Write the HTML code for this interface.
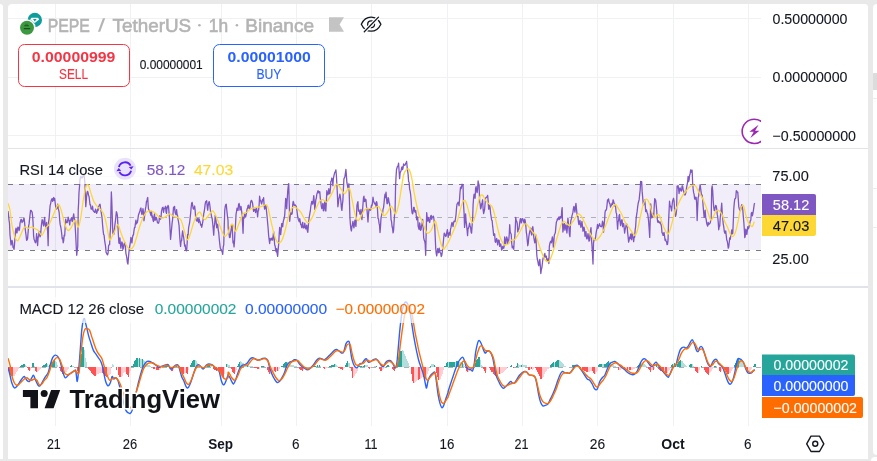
<!DOCTYPE html>
<html><head><meta charset="utf-8">
<style>
html,body{margin:0;padding:0;}
body{width:877px;height:461px;overflow:hidden;background:#e9e9ea;position:relative;font-family:"Liberation Sans",sans-serif;color:#131722;}
.abs{position:absolute;}
#leftp{left:0;top:4px;width:3px;height:455px;background:#fff;border-top-right-radius:3px;}
#rightp{left:873px;top:4px;width:4px;height:451px;background:#fff;border-radius:4px 0 0 4px;}
#rightp2{left:871px;top:457px;width:6px;height:4px;background:#fff;border-top-left-radius:4px;}
.rl{left:873px;width:4px;height:1px;background:#ebebec;}
#rbox{left:873px;top:73px;width:4px;height:17px;background:#dcdcdd;}
#chart{left:8px;top:4px;width:860px;height:455px;background:#fff;border-radius:4px 4px 0 0;overflow:hidden;}
</style></head><body>
<div class="abs" id="leftp"></div>
<div class="abs" id="rightp"></div>
<div class="abs" id="rightp2"></div>
<div class="abs" id="rbox"></div>
<div class="abs rl" style="top:98px"></div><div class="abs rl" style="top:188px"></div><div class="abs rl" style="top:227px"></div>
<div class="abs" id="chart">
<svg id="plot" width="860" height="455" viewBox="8 4 860 455" style="position:absolute;left:0;top:0;will-change:transform" font-family="Liberation Sans, sans-serif">
<g stroke="#f0f1f3" stroke-width="1" shape-rendering="crispEdges" fill="none">
<path d="M55.5 4V426M130.5 4V426M221.5 4V426M296.5 4V426M371.5 4V426M447.5 4V426M522.5 4V426M597.5 4V426M673.5 4V426M748.5 4V426"/>
<path d="M8 18.5H761M8 77.5H761M8 135.5H761M8 176.5H761M8 259.5H761"/>
</g>
<rect x="8" y="148" width="860" height="1" fill="#e0e3eb"/>
<rect x="8" y="286" width="860" height="2" fill="#e0e3eb"/>
<rect x="8" y="184" width="753" height="66" fill="#7e57c2" fill-opacity="0.1"/>
<g stroke="#787b86" stroke-width="1" fill="none" shape-rendering="crispEdges" stroke-dasharray="5 6">
<path d="M8 184.5H761"/><path d="M8 250.5H761"/>
</g>
<path d="M8 217.5H761" stroke="#787b86" stroke-opacity="0.55" stroke-width="1" fill="none" shape-rendering="crispEdges" stroke-dasharray="5 6"/>
<path d="M8.00 211.04L8.50 214.73L9.00 219.97L9.50 223.49L10.01 235.26L10.51 239.76L11.01 245.02L11.51 243.28L12.01 240.48L12.52 242.33L13.02 247.36L13.52 247.66L14.02 249.39L14.52 244.31L15.02 237.12L15.53 230.96L16.03 228.10L16.53 232.76L17.03 232.73L17.53 228.52L18.03 227.03L18.54 227.86L19.04 230.60L19.54 228.95L20.04 223.03L20.54 220.95L21.04 219.32L21.55 219.80L22.05 222.62L22.55 221.17L23.05 221.36L23.55 219.05L24.05 218.11L24.55 222.36L25.06 227.77L25.56 231.60L26.06 235.41L26.56 240.26L27.06 240.01L27.56 238.84L28.07 232.63L28.57 226.39L29.07 223.88L29.57 219.10L30.08 214.46L30.58 210.35L31.08 210.28L31.58 211.61L32.08 211.84L32.59 215.80L33.09 223.01L33.59 235.61L34.09 239.51L34.59 240.54L35.09 242.16L35.59 242.84L36.09 240.32L36.60 233.58L37.10 239.42L37.60 245.48L38.10 237.75L38.60 235.92L39.11 232.11L39.61 231.45L40.11 236.83L40.61 234.85L41.11 228.14L41.61 223.49L42.11 219.73L42.62 219.99L43.12 223.79L43.62 225.95L44.12 222.40L44.62 217.38L45.12 223.99L45.63 226.99L46.13 225.55L46.63 222.37L47.14 226.59L47.64 231.80L48.14 245.63L48.64 221.80L49.14 217.85L49.64 211.09L50.14 205.34L50.65 203.56L51.15 200.63L51.65 199.30L52.15 198.75L52.65 201.32L53.16 198.67L53.66 197.50L54.16 200.32L54.66 198.40L55.16 202.76L55.66 206.55L56.16 209.04L56.67 208.29L57.17 208.19L57.67 204.12L58.17 208.43L58.67 210.21L59.17 212.57L59.68 219.89L60.18 224.65L60.68 226.50L61.18 229.54L61.68 233.65L62.19 238.78L62.69 237.75L63.19 242.74L63.69 240.53L64.19 235.12L64.69 235.69L65.19 226.69L65.70 219.24L66.20 221.66L66.70 222.67L67.20 222.55L67.70 220.29L68.20 217.13L68.71 219.06L69.21 221.76L69.71 224.89L70.21 220.28L70.71 220.22L71.22 218.28L71.72 217.63L72.22 221.61L72.72 220.40L73.22 216.33L73.72 214.01L74.22 218.30L74.73 219.71L75.23 227.31L75.73 236.03L76.23 246.66L76.73 255.30L77.23 250.17L77.74 246.47L78.24 209.39L78.61 202.90L78.99 192.78L79.50 186.56L80.00 179.42L80.50 177.05L81.00 176.57L81.50 177.60L82.00 177.81L82.50 177.61L83.01 176.02L83.51 174.22L84.01 174.78L84.51 178.68L85.01 184.51L85.39 197.02L85.77 206.67L86.14 202.56L86.52 197.04L87.02 192.82L87.52 191.33L88.02 192.58L88.52 195.18L89.03 196.51L89.53 200.47L90.03 204.90L90.53 204.67L91.03 208.99L91.53 208.96L92.03 209.14L92.54 206.22L93.04 210.39L93.54 211.24L94.05 211.27L94.55 212.36L95.05 211.92L95.55 209.06L96.05 211.72L96.55 213.36L97.06 212.28L97.56 209.45L98.06 210.65L98.56 206.34L99.06 205.84L99.56 204.60L100.06 204.25L100.57 208.23L101.07 211.38L101.57 214.68L102.07 217.79L102.57 224.87L103.07 230.16L103.58 234.42L104.08 235.05L104.58 240.06L105.08 243.34L105.58 246.35L106.09 252.39L106.59 253.24L107.09 254.27L107.59 254.87L108.09 253.04L108.59 245.76L109.09 244.69L109.60 244.62L110.10 233.68L110.60 227.27L110.97 208.09L111.35 191.93L111.72 199.58L112.10 210.26L112.48 223.49L112.86 233.51L113.36 234.02L113.86 234.27L114.36 230.15L114.86 225.05L115.37 221.39L115.87 216.38L116.37 211.69L116.87 212.89L117.37 215.64L117.87 224.87L118.38 234.50L118.88 242.96L119.38 243.41L119.88 237.84L120.38 243.95L120.88 248.14L121.38 244.14L121.89 241.85L122.39 243.53L122.89 249.38L123.40 248.03L123.90 244.80L124.40 242.97L124.90 242.69L125.40 246.75L125.90 253.34L126.41 255.61L126.91 258.49L127.41 262.85L127.91 264.13L128.41 258.15L128.91 252.35L129.41 247.77L129.92 244.89L130.42 242.09L130.92 237.33L131.42 240.40L131.92 242.88L132.43 238.23L132.93 235.17L133.43 235.06L133.93 231.05L134.43 227.73L134.93 227.63L135.44 223.37L135.94 220.07L136.44 223.92L136.94 223.05L137.44 222.22L137.94 218.59L138.44 215.11L138.95 213.84L139.45 212.11L139.95 210.68L140.45 208.77L140.95 207.98L141.45 212.66L141.96 214.51L142.46 212.14L142.96 208.53L143.46 212.08L143.96 220.77L144.47 217.18L144.97 212.21L145.47 208.74L145.97 206.19L146.47 201.22L146.97 201.52L147.35 198.25L147.73 197.48L148.10 204.46L148.48 208.87L148.98 210.41L149.48 210.38L149.99 212.10L150.49 213.95L150.99 215.66L151.49 211.34L151.99 216.54L152.49 215.98L153.00 220.12L153.50 221.55L154.00 217.16L154.50 213.87L155.00 220.25L155.50 219.63L156.00 217.41L156.51 217.76L157.01 220.30L157.51 222.85L158.01 222.93L158.51 223.22L159.01 221.59L159.52 215.99L160.02 218.05L160.52 219.24L161.02 217.08L161.52 211.32L162.03 209.06L162.53 207.54L163.03 207.21L163.53 212.30L164.03 209.19L164.53 208.35L165.03 207.93L165.54 206.25L166.04 212.10L166.54 213.42L167.04 207.16L167.54 207.72L168.05 205.43L168.55 206.69L169.05 212.93L169.55 219.42L170.05 229.48L170.55 239.40L171.06 234.15L171.56 228.99L172.06 223.33L172.56 219.78L173.06 213.15L173.56 207.15L174.06 209.65L174.57 206.33L175.07 212.24L175.57 213.76L176.07 214.70L176.57 209.57L177.07 214.26L177.58 215.78L178.08 219.66L178.58 222.25L179.08 225.75L179.58 234.82L180.09 241.30L180.59 246.46L181.09 241.22L181.59 240.85L182.09 235.34L182.60 230.89L183.10 234.51L183.60 237.19L184.10 240.76L184.60 245.98L185.11 244.95L185.61 248.82L186.11 250.64L186.61 250.82L187.11 244.11L187.61 234.52L188.12 234.83L188.62 227.65L189.12 225.24L189.62 222.71L190.12 217.95L190.62 213.45L191.12 207.77L191.63 203.31L192.13 202.35L192.63 205.19L193.13 208.52L193.63 209.09L194.13 208.20L194.64 206.01L195.14 210.26L195.64 217.79L196.14 219.76L196.64 220.83L197.14 221.22L197.65 218.53L198.15 218.63L198.65 222.57L199.15 218.88L199.65 220.76L200.16 222.08L200.66 225.04L201.16 224.43L201.66 227.24L202.16 225.06L202.66 222.50L203.16 219.30L203.67 213.89L204.17 211.74L204.67 208.32L205.17 204.10L205.67 201.65L206.18 201.53L206.68 200.71L207.18 206.11L207.68 210.19L208.18 205.38L208.68 202.80L209.19 201.60L209.69 204.23L210.19 208.38L210.69 212.95L211.19 214.36L211.69 217.30L212.19 218.74L212.70 223.26L213.20 228.63L213.70 235.14L214.20 226.75L214.70 223.94L215.20 215.30L215.71 218.38L216.21 222.33L216.71 227.74L217.21 224.19L217.71 224.67L218.22 229.95L218.72 232.65L219.22 238.45L219.72 243.42L220.22 247.61L220.73 249.36L221.23 249.36L221.73 250.99L222.23 251.98L222.73 254.28L223.24 247.02L223.74 244.92L224.24 226.77L224.74 210.43L225.24 206.52L225.74 204.61L226.25 204.11L226.75 209.47L227.38 215.59L228.00 220.07L228.15 227.24L228.57 231.47L229.00 233.29L229.50 237.35L230.01 237.57L230.51 233.99L231.01 230.35L231.51 227.19L232.01 224.48L232.51 232.59L233.02 242.96L233.52 241.12L234.02 246.93L234.52 241.01L235.02 230.23L235.53 224.37L236.03 214.36L236.53 211.52L237.03 208.15L237.53 210.05L238.03 210.43L238.53 204.84L239.04 203.48L239.54 205.47L240.04 210.13L240.54 207.55L241.04 206.47L241.55 210.74L242.05 214.08L242.55 223.58L243.05 233.33L243.55 217.36L244.06 218.43L244.56 214.06L245.06 215.22L245.56 217.02L246.06 215.10L246.56 212.70L247.06 209.12L247.57 208.11L248.07 205.46L248.57 205.07L249.07 208.38L249.57 209.03L250.07 207.58L250.58 202.53L251.08 200.70L251.58 200.37L252.08 201.74L252.58 203.24L253.09 207.69L253.59 211.42L254.09 210.89L254.59 209.25L255.09 209.01L255.59 212.61L256.10 209.63L256.60 208.26L257.10 211.27L257.60 216.97L258.10 211.28L258.60 210.14L259.11 204.98L259.61 196.24L260.11 200.72L260.61 200.38L261.11 202.69L261.61 203.98L262.12 201.82L262.62 199.39L263.12 200.58L263.62 197.71L264.12 205.42L264.62 209.07L265.12 208.61L265.63 205.02L266.13 207.14L266.63 212.42L267.13 216.95L267.64 223.01L268.14 228.49L268.64 235.47L269.14 239.80L269.64 243.49L270.14 238.35L270.65 240.07L271.15 240.13L271.65 238.12L272.15 238.14L272.65 240.14L273.15 235.75L273.66 231.56L274.16 237.51L274.66 244.98L275.16 246.03L275.66 250.13L276.17 251.92L276.67 248.58L277.17 253.75L277.67 256.30L278.17 249.41L278.67 243.97L279.18 234.44L279.68 227.33L280.18 230.84L280.68 234.67L281.18 229.59L281.68 223.67L282.19 223.71L282.69 226.74L283.19 221.81L283.69 219.79L284.19 218.49L284.69 215.12L285.19 207.38L285.70 198.29L286.20 201.46L286.70 208.60L287.20 199.65L287.70 191.28L288.20 186.52L288.71 183.61L289.21 202.80L289.71 221.29L290.21 215.61L290.71 212.56L291.22 213.47L291.72 214.34L292.22 213.13L292.72 204.56L293.22 201.35L293.72 202.76L294.23 205.50L294.73 205.33L295.23 204.92L295.73 205.67L296.23 206.32L296.73 209.20L297.24 213.09L297.74 216.81L298.24 219.16L298.74 220.38L299.24 221.72L299.74 218.72L300.25 221.81L300.75 224.58L301.25 225.11L301.75 227.59L302.25 224.17L302.75 222.29L303.25 227.99L303.76 226.77L304.26 227.76L304.76 223.13L305.26 226.14L305.77 228.90L306.27 227.70L306.77 225.25L307.27 230.61L307.77 232.37L308.27 226.92L308.78 220.49L309.28 216.87L309.78 213.87L310.28 211.22L310.78 206.74L311.28 203.90L311.79 201.44L312.29 201.92L312.79 204.23L313.29 200.11L313.79 195.64L314.30 202.31L314.80 209.28L315.30 205.13L315.80 199.74L316.30 198.32L316.80 194.22L317.31 193.10L317.81 190.90L318.31 190.95L318.81 192.95L319.31 191.70L319.81 191.89L320.31 198.35L320.82 201.67L321.32 206.45L321.82 208.55L322.32 207.51L322.82 203.34L323.32 210.59L323.83 210.77L324.33 204.05L324.83 201.35L325.33 209.19L325.83 211.02L326.33 202.32L326.84 190.73L327.34 193.40L327.84 194.81L328.34 192.98L328.84 188.70L329.35 193.77L329.85 193.50L330.35 189.67L330.85 181.32L331.35 180.93L331.85 178.02L332.36 179.17L332.86 185.62L333.36 178.76L333.86 176.15L334.36 173.93L334.86 172.10L335.37 171.88L335.87 169.84L336.37 175.30L336.87 184.30L337.37 193.85L337.87 206.78L338.38 203.09L338.88 198.39L339.38 197.11L339.88 194.21L340.38 197.22L340.88 201.19L341.38 207.75L341.89 210.34L342.39 204.38L342.89 200.36L343.39 188.91L343.90 179.08L344.40 177.81L344.90 176.86L345.40 173.08L345.90 169.28L346.40 175.66L346.91 182.94L347.41 184.84L347.91 187.91L348.41 186.07L348.91 183.77L349.42 200.09L349.92 217.56L350.42 224.73L350.92 229.09L351.42 230.97L351.92 226.55L352.43 224.29L352.93 221.30L353.43 225.78L353.93 227.85L354.43 223.90L354.93 220.25L355.44 224.23L355.94 226.39L356.44 216.42L356.94 205.38L357.44 203.23L357.94 201.60L358.44 211.08L358.95 209.79L359.45 211.45L359.95 214.21L360.45 212.57L360.95 209.51L361.45 216.71L361.96 219.55L362.46 211.63L362.96 204.56L363.46 198.02L363.96 196.20L364.47 201.55L364.97 201.26L365.47 199.09L365.97 199.85L366.47 206.49L366.97 209.39L367.48 215.43L367.98 221.98L368.48 213.96L368.98 209.56L369.48 209.41L369.98 209.95L370.49 210.23L370.99 208.56L371.49 205.11L371.99 205.72L372.49 202.79L372.99 197.21L373.50 200.64L374.00 202.12L374.50 203.43L375.00 204.15L375.50 203.16L376.00 206.34L376.50 201.53L377.01 203.21L377.51 209.90L378.01 218.36L378.51 218.96L379.01 223.15L379.51 225.18L380.02 232.55L380.52 226.10L381.02 217.88L381.52 215.72L382.03 213.10L382.53 213.55L383.03 209.25L383.53 207.62L384.03 203.22L384.53 197.65L385.04 194.07L385.54 197.50L386.04 192.19L386.54 198.91L387.04 203.62L387.55 203.58L388.05 197.72L388.55 198.46L389.05 202.34L389.55 203.51L390.05 207.77L390.56 210.18L391.06 219.84L391.56 221.51L392.06 226.55L392.56 228.27L393.06 232.86L393.56 230.59L394.07 222.11L394.57 214.47L395.07 210.67L395.57 186.27L396.07 176.14L396.57 169.17L397.07 167.67L397.58 166.06L398.08 166.16L398.58 163.22L399.08 170.85L399.58 178.65L400.08 173.11L400.59 171.74L401.09 170.75L401.59 167.80L402.10 166.86L402.60 169.57L403.10 167.78L403.60 163.99L404.10 165.37L404.60 165.20L405.11 165.18L405.61 163.45L406.11 162.86L406.61 161.47L407.11 166.63L407.61 170.86L408.12 174.36L408.62 181.62L409.12 182.18L409.62 189.27L410.12 190.93L410.62 194.49L411.12 199.96L411.63 208.84L412.13 213.18L412.63 213.78L413.13 211.89L413.63 207.31L414.13 207.48L414.64 211.28L415.14 212.28L415.64 210.37L416.14 213.94L416.64 219.77L417.14 218.51L417.65 216.84L418.15 225.98L418.65 227.98L419.15 229.53L419.65 222.86L420.15 226.20L420.66 230.30L421.16 229.14L421.66 225.55L422.16 223.31L422.66 219.45L423.17 227.20L423.67 237.63L424.17 240.20L424.67 241.00L425.17 243.85L425.67 255.24L426.18 233.23L426.68 212.62L427.18 217.39L427.68 221.02L428.18 217.39L428.68 218.21L429.19 221.41L429.69 222.49L430.19 219.35L430.69 216.08L431.19 215.36L431.69 219.27L432.19 217.21L432.70 217.12L433.20 216.06L433.70 217.27L434.20 221.53L434.70 225.33L435.20 236.63L435.71 248.23L436.21 253.36L436.71 255.90L437.21 252.39L437.71 248.71L438.22 251.25L438.72 252.78L439.22 248.26L439.72 250.89L440.23 252.58L440.73 253.17L441.23 256.52L441.73 255.37L442.23 252.28L442.73 247.80L443.24 243.00L443.74 237.49L444.24 233.11L444.74 233.66L445.24 235.48L445.74 236.51L446.25 235.62L446.75 232.68L447.38 229.63L448.00 234.35L448.15 237.33L448.57 233.60L449.00 233.81L449.50 232.31L450.01 235.41L450.51 229.26L451.01 227.44L451.51 224.08L452.01 222.39L452.51 224.04L453.02 226.59L453.52 223.06L454.02 221.04L454.52 221.43L455.02 221.54L455.52 218.27L456.03 214.55L456.53 208.10L457.03 203.84L457.53 203.86L458.03 202.21L458.53 203.08L459.04 205.60L459.54 199.10L460.04 191.96L460.54 187.11L461.04 188.73L461.55 186.99L462.05 184.26L462.55 185.02L463.05 184.90L463.55 205.19L464.06 212.70L464.56 227.39L465.06 221.13L465.56 213.82L466.06 220.65L466.56 225.09L467.06 229.66L467.57 235.70L468.07 228.24L468.57 228.23L469.07 225.85L469.57 223.09L470.07 226.07L470.58 227.27L471.08 231.96L471.58 233.20L472.08 225.85L472.58 220.56L473.09 204.91L473.59 197.97L474.09 194.11L474.59 196.36L475.09 198.24L475.60 188.53L476.10 186.65L476.60 190.60L477.10 192.68L477.60 189.42L478.10 180.89L478.61 183.80L479.11 184.92L479.61 201.40L480.11 203.63L480.61 208.87L481.11 207.56L481.61 203.98L482.12 202.64L482.62 199.77L483.12 209.68L483.62 213.59L484.12 211.52L484.62 209.24L485.12 203.04L485.63 198.04L486.13 197.38L486.63 197.26L487.13 196.71L487.64 195.34L488.14 200.77L488.64 209.18L489.14 208.73L489.64 205.38L490.14 208.09L490.65 213.67L491.15 216.75L491.65 220.24L492.15 220.53L492.65 226.19L493.15 230.13L493.66 235.33L494.16 233.96L494.66 233.99L495.16 241.54L495.66 242.31L496.17 240.10L496.67 238.51L497.17 240.68L497.67 244.83L498.17 241.17L498.67 240.05L499.18 240.52L499.68 246.38L500.18 245.69L500.68 243.80L501.18 246.31L501.68 250.22L502.19 249.06L502.69 246.51L503.19 246.57L503.69 248.30L504.19 246.15L504.69 237.00L505.19 241.98L505.70 243.95L506.20 239.13L506.70 236.97L507.20 238.48L507.70 243.43L508.20 239.90L508.71 240.53L509.21 234.84L509.71 224.74L510.21 232.40L510.71 233.19L511.22 234.24L511.72 243.49L512.22 247.78L512.72 246.43L513.22 247.53L513.72 249.25L514.23 240.39L514.73 237.86L515.23 229.28L515.73 217.43L516.23 220.78L516.73 221.33L517.24 223.36L517.74 231.85L518.24 229.77L518.74 229.32L519.24 226.50L519.74 222.26L520.25 219.04L520.75 218.59L521.25 222.97L521.75 220.99L522.25 218.93L522.75 218.69L523.25 220.05L523.76 222.22L524.26 223.17L524.76 219.13L525.26 221.01L525.77 225.04L526.27 231.78L526.77 235.09L527.27 240.74L527.77 245.75L528.27 243.18L528.78 236.86L529.28 233.90L529.78 231.34L530.28 229.83L530.78 228.14L531.28 233.44L531.79 235.05L532.29 229.16L532.79 226.60L533.29 230.61L533.79 237.40L534.29 240.30L534.80 242.83L535.30 240.70L535.80 234.96L536.30 244.82L536.80 255.26L537.30 258.97L537.81 261.02L538.31 264.21L538.81 265.77L539.31 261.96L539.81 259.31L540.32 265.70L540.82 273.49L541.32 269.46L541.82 267.86L542.32 263.96L542.82 259.51L543.33 257.38L543.83 257.74L544.33 254.72L544.83 253.42L545.33 257.16L545.83 256.84L546.34 256.14L546.84 259.88L547.34 260.69L547.84 258.81L548.34 259.36L548.84 263.50L549.35 246.33L549.85 243.52L550.35 241.84L550.85 241.09L551.35 242.81L551.86 239.98L552.36 236.91L552.86 240.41L553.36 247.12L553.86 240.89L554.36 234.92L554.87 233.80L555.37 232.50L555.87 226.93L556.37 222.16L556.87 220.88L557.37 218.93L557.88 219.81L558.38 217.76L558.88 217.02L559.38 219.48L559.88 217.04L560.38 216.59L560.88 218.20L561.39 215.84L561.76 210.28L562.14 207.61L562.51 221.76L562.89 231.99L563.39 228.63L563.90 224.42L564.40 223.66L564.90 230.10L565.40 225.43L565.90 224.90L566.40 228.37L566.91 232.99L567.41 227.11L567.91 218.09L568.41 223.14L568.91 227.54L569.41 234.15L569.92 236.63L570.42 225.47L570.92 220.16L571.42 219.08L571.92 215.94L572.42 214.23L572.93 212.17L573.43 208.44L573.93 206.36L574.43 209.40L574.93 212.16L575.43 207.44L575.94 203.36L576.44 208.35L576.94 213.49L577.44 216.63L577.94 216.35L578.45 222.09L578.95 224.55L579.45 222.57L579.95 220.46L580.45 224.97L580.95 227.38L581.46 224.31L581.96 221.48L582.46 225.80L582.96 231.24L583.46 230.33L583.96 227.09L584.47 229.07L584.97 236.23L585.47 234.97L585.97 231.56L586.47 237.95L586.97 239.03L587.48 237.34L587.98 233.54L588.48 236.96L588.98 241.16L589.48 240.67L589.98 235.54L590.49 230.95L590.99 227.64L591.49 239.17L591.99 246.16L592.49 253.72L592.99 264.00L593.50 243.21L594.00 239.68L594.50 240.41L595.00 239.51L595.50 237.80L596.00 233.64L596.51 230.67L597.01 228.54L597.51 224.44L598.01 228.31L598.51 226.67L599.01 225.59L599.52 223.74L600.02 225.22L600.52 226.41L601.02 226.56L601.52 226.73L602.02 224.79L602.53 221.06L603.03 223.11L603.53 232.12L604.03 225.79L604.53 220.80L605.03 212.39L605.54 210.12L606.04 210.31L606.54 209.18L607.04 204.82L607.54 199.93L608.04 200.93L608.55 198.89L609.05 202.08L609.55 203.37L610.05 204.20L610.55 207.12L611.05 205.47L611.56 205.10L612.06 203.21L612.56 204.49L613.06 199.83L613.56 201.08L614.07 203.20L614.57 203.84L615.07 206.45L615.57 206.58L616.07 212.38L616.57 213.78L617.08 221.13L617.58 229.10L618.08 221.61L618.58 220.90L619.08 215.50L619.58 214.48L620.09 221.83L620.59 225.71L621.09 222.96L621.59 219.87L622.10 219.83L622.60 226.75L623.10 224.15L623.60 223.56L624.10 227.20L624.60 233.05L625.11 229.53L625.61 227.93L626.11 225.23L626.61 223.87L627.11 225.26L627.61 232.37L628.12 236.84L628.62 242.16L629.12 240.04L629.62 237.13L630.12 238.41L630.62 234.16L631.12 238.90L631.63 239.80L632.13 233.01L632.63 236.10L633.13 237.31L633.63 241.65L634.13 237.10L634.64 237.30L635.14 229.86L635.64 226.53L636.14 218.66L636.64 214.62L637.14 211.42L637.65 206.83L638.15 203.52L638.65 201.50L639.15 199.63L639.65 194.68L640.15 190.22L640.66 181.28L641.16 182.98L641.66 181.71L642.16 191.63L642.66 197.08L643.16 203.36L643.67 204.99L644.17 201.95L644.67 200.02L645.17 203.86L645.67 211.55L646.17 209.63L646.68 210.73L647.18 213.19L647.68 213.87L648.18 217.37L648.68 222.19L649.18 229.10L649.69 237.43L650.19 221.15L650.69 203.81L651.19 209.00L651.69 217.91L652.20 217.27L652.70 213.93L653.20 217.08L653.70 216.65L654.20 206.73L654.70 198.67L655.21 199.50L655.71 200.40L656.21 205.41L656.71 210.66L657.21 218.29L657.71 222.19L658.36 220.81L659.01 222.65L659.51 222.80L660.01 221.91L660.51 223.74L661.01 224.28L661.51 226.84L662.02 232.93L662.52 232.95L663.02 235.46L663.52 235.44L664.02 232.41L664.52 235.48L665.03 240.26L665.53 239.04L666.03 241.27L666.53 241.63L667.03 244.56L667.53 244.37L668.04 239.92L668.54 222.39L669.04 211.37L669.54 201.23L670.04 205.72L670.55 206.12L671.05 208.19L671.55 210.86L672.05 205.53L672.55 201.45L673.05 199.77L673.56 198.27L674.06 201.08L674.56 208.63L675.06 209.15L675.56 216.45L676.07 214.33L676.57 209.95L677.07 186.10L677.57 186.42L678.07 185.57L678.58 188.87L679.08 193.53L679.58 189.29L680.08 187.81L680.58 189.72L681.08 191.16L681.59 190.95L682.09 185.78L682.59 185.93L683.09 189.22L683.59 190.97L684.09 192.72L684.60 194.94L685.10 194.90L685.60 193.65L686.10 191.55L686.60 187.36L687.10 184.87L687.61 182.21L688.11 176.36L688.61 181.49L689.11 179.92L689.61 175.23L690.11 173.98L690.62 169.98L691.12 172.23L691.62 170.14L692.12 170.16L692.62 182.75L693.12 188.67L693.62 192.69L694.12 194.44L694.63 198.84L695.13 199.12L695.63 197.18L696.13 197.36L696.64 203.45L697.14 220.59L697.64 208.21L698.14 197.43L698.64 196.35L699.14 190.40L699.64 187.90L700.15 184.62L700.65 188.58L701.15 192.38L701.65 196.23L702.15 195.01L702.65 199.33L703.16 206.78L703.66 212.30L704.16 217.38L704.66 214.50L705.16 210.19L705.66 217.14L706.17 219.45L706.67 223.40L707.17 224.95L707.67 226.18L708.17 222.28L708.67 224.63L709.18 224.07L709.68 223.36L710.18 223.06L710.68 220.61L711.18 219.67L711.69 188.74L712.19 185.95L712.69 190.83L713.19 200.40L713.69 206.66L714.20 210.53L714.70 210.52L715.20 206.94L715.70 205.37L716.20 205.97L716.70 208.77L717.21 214.14L717.71 216.98L718.21 221.87L718.71 229.75L719.21 226.59L719.71 226.11L720.22 218.03L720.72 213.50L721.22 208.93L721.72 203.10L722.22 212.83L722.72 218.18L723.23 224.24L723.73 226.66L724.23 231.01L724.73 233.06L725.23 233.24L725.73 230.90L726.24 235.52L726.74 240.08L727.24 241.09L727.74 244.01L728.24 248.20L728.74 247.02L729.25 242.30L729.75 237.93L730.25 239.39L730.75 235.89L731.25 233.36L731.75 229.82L732.25 233.75L732.76 233.20L733.26 222.33L733.76 209.25L734.26 203.35L734.77 198.85L735.27 198.83L735.77 197.83L736.27 190.77L736.77 191.08L737.27 192.39L737.78 192.21L738.28 199.11L738.78 206.65L739.28 208.74L739.78 210.25L740.28 210.69L740.79 209.47L741.29 206.53L741.79 204.61L742.29 206.50L742.79 209.91L743.29 216.33L743.80 221.94L744.30 228.98L744.80 237.63L745.30 235.53L745.80 229.24L746.30 231.22L746.81 234.43L747.31 230.50L747.81 226.59L748.31 228.79L748.81 227.89L749.32 225.44L749.82 223.07L750.32 220.56L750.82 220.23L751.32 213.06L751.82 212.47L752.33 215.76L752.83 213.75L753.33 210.78L753.83 207.45L754.33 203.75L754.90 203.20" fill="none" stroke="#7e57c2" stroke-width="1.3" stroke-linejoin="round"/>
<path d="M8.00 203.15C8.34 204.32 9.38 206.70 10.01 210.17C10.64 213.64 11.05 219.79 11.76 223.97C12.47 228.15 13.31 232.46 14.27 235.26C15.23 238.06 16.48 240.78 17.53 240.78C18.58 240.78 19.41 237.52 20.54 235.26C21.67 233.00 23.05 228.40 24.31 227.23C25.56 226.06 26.82 228.23 28.07 228.23C29.32 228.23 30.58 227.10 31.83 227.23C33.08 227.36 34.55 228.49 35.59 228.99C36.64 229.49 37.05 229.20 38.10 230.24C39.15 231.28 40.61 235.59 41.87 235.26C43.12 234.92 44.38 230.11 45.63 228.23C46.88 226.35 48.14 226.14 49.39 223.97C50.64 221.80 51.89 218.12 53.15 215.19C54.41 212.26 55.96 208.17 56.92 206.41C57.88 204.65 58.21 204.02 58.92 204.65C59.63 205.28 60.26 207.16 61.18 210.17C62.10 213.18 63.35 219.37 64.44 222.71C65.53 226.06 66.66 229.32 67.70 230.24C68.75 231.16 69.71 229.48 70.71 228.23C71.71 226.97 72.88 224.05 73.72 222.71C74.56 221.37 74.98 219.46 75.73 220.21C76.48 220.96 77.40 227.65 78.24 227.23C79.08 226.81 79.91 222.21 80.75 217.70C81.59 213.19 82.42 205.24 83.26 200.14C84.10 195.04 84.94 189.60 85.77 187.09C86.60 184.58 87.44 184.17 88.27 185.09C89.10 186.01 89.94 190.10 90.78 192.61C91.62 195.12 92.45 198.13 93.29 200.14C94.13 202.15 94.96 203.40 95.80 204.65C96.64 205.90 97.39 206.74 98.31 207.66C99.23 208.58 100.27 208.71 101.32 210.17C102.36 211.63 103.62 213.51 104.58 216.44C105.54 219.37 106.25 223.84 107.09 227.73C107.93 231.62 108.77 238.31 109.60 239.77C110.43 241.23 111.26 237.89 112.10 236.51C112.94 235.13 113.65 233.46 114.61 231.49C115.57 229.53 116.83 224.51 117.87 224.72C118.92 224.93 119.88 230.16 120.88 232.75C121.88 235.34 122.85 237.97 123.90 240.27C124.95 242.57 126.07 245.09 127.16 246.55C128.25 248.01 129.38 249.05 130.42 249.05C131.46 249.05 132.43 248.43 133.43 246.55C134.43 244.67 135.40 241.12 136.44 237.77C137.48 234.43 138.53 230.03 139.70 226.48C140.87 222.92 142.21 218.95 143.46 216.44C144.71 213.93 145.97 212.35 147.22 211.43C148.47 210.51 149.74 210.71 150.99 210.92C152.25 211.13 153.50 211.76 154.75 212.68C156.00 213.60 157.25 215.52 158.51 216.44C159.76 217.36 161.03 218.20 162.28 218.20C163.53 218.20 164.79 217.15 166.04 216.44C167.29 215.73 168.55 213.93 169.80 213.93C171.05 213.93 172.31 215.90 173.56 216.44C174.81 216.98 176.08 216.56 177.33 217.19C178.59 217.82 179.84 217.62 181.09 220.21C182.34 222.80 183.81 229.49 184.85 232.75C185.89 236.01 186.52 239.35 187.36 239.77C188.20 240.19 188.83 238.10 189.87 235.26C190.91 232.42 192.38 226.27 193.63 222.71C194.88 219.16 196.36 215.69 197.40 213.93C198.44 212.18 199.06 211.76 199.90 212.18C200.74 212.60 201.57 215.19 202.41 216.44C203.25 217.69 203.88 219.91 204.92 219.70C205.96 219.49 207.43 216.65 208.68 215.19C209.94 213.73 211.40 211.13 212.45 210.92C213.50 210.71 213.92 211.97 214.96 213.93C216.00 215.90 217.47 219.57 218.72 222.71C219.97 225.85 221.44 230.45 222.48 232.75C223.52 235.05 224.07 236.43 224.99 236.51C225.91 236.59 227.47 233.88 228.00 233.25C228.53 232.62 227.73 234.00 228.15 232.75C228.57 231.50 229.70 227.06 230.51 225.72C231.32 224.38 232.18 223.76 233.02 224.72C233.86 225.68 234.49 231.83 235.53 231.49C236.57 231.16 238.04 225.64 239.29 222.71C240.54 219.78 241.80 215.69 243.05 213.93C244.30 212.18 245.56 213.02 246.81 212.18C248.06 211.34 249.33 209.67 250.58 208.92C251.84 208.17 253.09 207.95 254.34 207.66C255.59 207.37 256.85 207.37 258.10 207.16C259.36 206.95 260.62 206.83 261.87 206.41C263.12 205.99 264.67 204.65 265.63 204.65C266.59 204.65 267.01 204.86 267.64 206.41C268.27 207.96 268.68 210.80 269.39 213.93C270.10 217.06 271.06 221.66 271.90 225.22C272.74 228.78 273.57 232.54 274.41 235.26C275.25 237.98 276.08 240.28 276.92 241.53C277.76 242.78 278.60 242.99 279.43 242.78C280.26 242.57 280.97 242.36 281.93 240.27C282.89 238.18 284.14 234.00 285.19 230.24C286.24 226.48 287.20 221.25 288.21 217.70C289.21 214.15 290.18 210.68 291.22 208.92C292.27 207.16 293.39 207.16 294.48 207.16C295.57 207.16 296.69 208.08 297.74 208.92C298.79 209.76 299.62 210.51 300.75 212.18C301.88 213.85 303.26 217.19 304.51 218.95C305.76 220.70 307.01 222.92 308.27 222.71C309.52 222.50 310.79 220.00 312.04 217.70C313.30 215.40 314.55 211.64 315.80 208.92C317.05 206.20 318.39 202.94 319.56 201.39C320.73 199.84 321.69 199.51 322.82 199.64C323.95 199.76 325.21 202.47 326.34 202.14C327.47 201.80 328.51 199.43 329.60 197.63C330.69 195.83 331.81 193.54 332.86 191.36C333.91 189.19 334.95 185.62 335.87 184.58C336.79 183.54 337.46 184.25 338.38 185.09C339.30 185.93 340.34 188.14 341.39 189.60C342.44 191.06 343.69 193.79 344.65 193.87C345.61 193.95 346.33 190.94 347.16 190.10C348.00 189.26 348.83 187.18 349.66 188.85C350.50 190.52 351.33 196.17 352.17 200.14C353.01 204.11 353.84 209.34 354.68 212.68C355.52 216.03 356.35 219.17 357.19 220.21C358.03 221.25 358.65 220.41 359.70 218.95C360.75 217.49 362.21 213.23 363.46 211.43C364.71 209.63 365.97 208.58 367.22 208.16C368.48 207.74 369.74 209.00 370.99 208.92C372.25 208.84 373.50 208.08 374.75 207.66C376.00 207.24 377.38 205.78 378.51 206.41C379.64 207.04 380.60 209.88 381.52 211.43C382.44 212.98 383.07 215.48 384.03 215.69C384.99 215.90 386.20 214.23 387.29 212.68C388.38 211.13 389.59 207.04 390.55 206.41C391.51 205.78 392.22 207.67 393.06 208.92C393.90 210.17 394.65 214.56 395.57 213.93C396.49 213.30 397.66 209.12 398.58 205.15C399.50 201.18 400.25 195.12 401.09 190.10C401.93 185.08 402.76 178.40 403.60 175.05C404.44 171.71 405.19 170.95 406.11 170.03C407.03 169.11 408.20 168.28 409.12 169.53C410.04 170.78 410.80 173.71 411.63 177.56C412.46 181.41 413.30 188.01 414.13 192.61C414.96 197.21 415.80 201.39 416.64 205.15C417.48 208.91 418.19 212.47 419.15 215.19C420.11 217.91 421.45 219.16 422.41 221.46C423.37 223.76 424.08 227.03 424.92 228.99C425.76 230.96 426.38 233.04 427.43 233.25C428.48 233.46 430.06 232.00 431.19 230.24C432.32 228.48 433.45 224.17 434.20 222.71C434.95 221.25 435.12 220.21 435.71 221.46C436.29 222.72 436.87 226.69 437.71 230.24C438.55 233.79 439.81 239.65 440.73 242.78C441.65 245.91 442.40 248.42 443.23 249.05C444.06 249.68 444.94 247.60 445.74 246.55C446.54 245.50 447.60 243.41 448.00 242.78C448.40 242.15 447.65 243.82 448.15 242.78C448.65 241.74 449.99 238.81 451.01 236.51C452.03 234.21 453.18 231.71 454.27 228.99C455.36 226.27 456.48 223.56 457.53 220.21C458.57 216.87 459.62 212.06 460.54 208.92C461.46 205.78 462.21 202.64 463.05 201.39C463.89 200.13 464.72 200.13 465.56 201.39C466.40 202.64 467.23 205.99 468.07 208.92C468.91 211.85 469.83 216.65 470.58 218.95C471.33 221.25 471.83 223.13 472.58 222.71C473.33 222.29 474.25 219.37 475.09 216.44C475.93 213.51 476.76 208.50 477.60 205.15C478.44 201.81 479.27 198.04 480.11 196.37C480.95 194.70 481.78 194.58 482.62 195.12C483.46 195.66 484.21 198.30 485.13 199.64C486.05 200.98 487.01 202.02 488.14 203.15C489.27 204.28 490.85 204.61 491.90 206.41C492.94 208.21 493.57 210.80 494.41 213.93C495.25 217.06 496.08 221.66 496.92 225.22C497.76 228.78 498.60 232.54 499.43 235.26C500.26 237.98 501.10 239.94 501.93 241.53C502.76 243.12 503.39 244.37 504.44 244.79C505.49 245.21 507.08 244.79 508.21 244.04C509.34 243.29 510.18 240.98 511.22 240.27C512.26 239.56 513.39 240.61 514.48 239.77C515.57 238.94 516.70 236.85 517.74 235.26C518.78 233.67 519.83 231.91 520.75 230.24C521.67 228.57 522.34 226.26 523.26 225.22C524.18 224.18 525.23 223.55 526.27 223.97C527.31 224.39 528.44 226.35 529.53 227.73C530.62 229.11 531.75 231.00 532.79 232.25C533.83 233.50 534.88 233.50 535.80 235.26C536.72 237.01 537.47 240.27 538.31 242.78C539.15 245.29 539.99 248.01 540.82 250.31C541.66 252.61 542.49 254.82 543.32 256.58C544.16 258.33 544.91 260.00 545.83 260.84C546.75 261.68 547.92 262.31 548.84 261.60C549.76 260.89 550.51 258.67 551.35 256.58C552.19 254.49 553.02 251.77 553.86 249.05C554.70 246.33 555.53 243.20 556.37 240.27C557.21 237.34 558.04 234.21 558.88 231.49C559.72 228.77 560.55 225.64 561.39 223.97C562.23 222.30 562.94 221.46 563.90 221.46C564.86 221.46 566.20 223.26 567.16 223.97C568.12 224.68 568.82 225.93 569.66 225.72C570.50 225.51 571.21 224.05 572.17 222.71C573.13 221.37 574.38 219.16 575.43 217.70C576.47 216.24 577.52 214.27 578.44 213.93C579.36 213.59 580.11 214.64 580.95 215.69C581.79 216.74 582.54 218.41 583.46 220.21C584.38 222.01 585.43 224.39 586.47 226.48C587.51 228.57 588.64 230.78 589.73 232.75C590.82 234.72 591.95 237.02 592.99 238.27C594.03 239.52 595.00 240.35 596.00 240.27C597.00 240.19 597.96 239.02 599.01 237.77C600.06 236.52 601.19 234.76 602.28 232.75C603.37 230.74 604.50 228.23 605.54 225.72C606.58 223.21 607.55 220.29 608.55 217.70C609.55 215.11 610.64 212.26 611.56 210.17C612.48 208.08 613.32 206.07 614.07 205.15C614.82 204.23 615.32 204.02 616.07 204.65C616.82 205.28 617.66 207.37 618.58 208.92C619.50 210.47 620.55 211.84 621.59 213.93C622.63 216.02 623.76 219.37 624.85 221.46C625.94 223.55 627.07 224.93 628.11 226.48C629.15 228.03 629.99 229.28 631.12 230.74C632.25 232.20 633.84 235.34 634.89 235.26C635.94 235.18 636.56 232.96 637.40 230.24C638.24 227.52 639.06 222.71 639.90 218.95C640.74 215.19 641.57 210.79 642.41 207.66C643.25 204.53 644.08 201.48 644.92 200.14C645.76 198.80 646.59 198.80 647.43 199.64C648.27 200.47 649.10 202.77 649.94 205.15C650.78 207.53 651.61 211.84 652.45 213.93C653.29 216.02 654.12 217.57 654.96 217.70C655.80 217.83 656.70 215.03 657.46 214.69C658.22 214.35 658.75 214.35 659.51 215.69C660.27 217.03 661.18 220.49 662.02 222.71C662.86 224.93 663.61 227.11 664.53 228.99C665.45 230.87 666.70 233.58 667.54 234.00C668.38 234.42 668.79 233.37 669.54 231.49C670.29 229.61 671.13 226.05 672.05 222.71C672.97 219.37 674.01 214.56 675.06 211.43C676.11 208.30 677.15 206.41 678.32 203.90C679.49 201.39 680.84 198.46 682.09 196.37C683.35 194.28 684.60 192.91 685.85 191.36C687.10 189.81 688.36 188.13 689.61 187.09C690.86 186.05 692.33 185.22 693.37 185.09C694.41 184.97 695.04 185.30 695.88 186.34C696.72 187.38 697.35 189.48 698.39 191.36C699.43 193.24 700.89 195.12 702.15 197.63C703.40 200.14 704.87 203.69 705.92 206.41C706.97 209.13 707.59 211.63 708.43 213.93C709.26 216.23 710.09 219.79 710.93 220.21C711.76 220.63 712.60 217.90 713.44 216.44C714.28 214.98 715.11 212.48 715.95 211.43C716.79 210.38 717.50 209.75 718.46 210.17C719.42 210.59 720.68 212.05 721.72 213.93C722.76 215.81 723.73 219.16 724.73 221.46C725.73 223.76 726.82 225.64 727.74 227.73C728.66 229.82 729.41 232.54 730.25 234.00C731.09 235.46 731.92 236.72 732.76 236.51C733.60 236.30 734.43 235.05 735.27 232.75C736.11 230.45 736.94 226.47 737.78 222.71C738.62 218.95 739.53 213.01 740.28 210.17C741.03 207.33 741.70 206.29 742.29 205.66C742.88 205.03 743.30 205.24 743.80 206.41C744.30 207.58 744.71 210.38 745.30 212.68C745.88 214.98 746.56 218.20 747.31 220.21C748.06 222.22 748.99 223.68 749.82 224.72C750.66 225.76 751.57 227.02 752.32 226.48C753.07 225.94 754.00 222.30 754.33 221.46" fill="none" stroke="#fdd835" stroke-width="1.3" stroke-linejoin="round"/>
<path d="M8 367.5H761" stroke="#787b86" stroke-opacity="0.6" stroke-width="1" fill="none" shape-rendering="crispEdges" stroke-dasharray="5 6"/>
<g shape-rendering="crispEdges">
<path fill="#ff5252" d="M8 367.40h1v3.24h-1zM9 367.40h1v5.36h-1zM10 367.40h1v7.97h-1zM11 367.40h1v8.63h-1zM12 367.40h1v8.75h-1zM27 367.40h1v0.74h-1zM28 367.40h1v2.91h-1zM29 367.40h1v3.46h-1zM35 367.40h1v3.17h-1zM36 367.40h1v4.12h-1zM59 367.40h1v0.67h-1zM60 367.40h1v3.55h-1zM61 367.40h1v4.61h-1zM62 367.40h1v6.37h-1zM63 367.40h1v6.79h-1zM77 367.40h1v3.41h-1zM78 367.40h1v4.60h-1zM88 367.40h1v1.30h-1zM89 367.40h1v2.71h-1zM90 367.40h1v3.58h-1zM91 367.40h1v5.35h-1zM92 367.40h1v6.92h-1zM93 367.40h1v7.67h-1zM94 367.40h1v8.73h-1zM95 367.40h1v9.06h-1zM102 367.40h1v5.80h-1zM103 367.40h1v6.19h-1zM104 367.40h1v7.57h-1zM105 367.40h1v8.20h-1zM106 367.40h1v9.22h-1zM116 367.40h1v3.01h-1zM118 367.40h1v7.91h-1zM119 367.40h1v9.51h-1zM120 367.40h1v9.68h-1zM126 367.40h1v6.66h-1zM127 367.40h1v7.75h-1zM128 367.40h1v9.54h-1zM153 367.40h1v1.19h-1zM154 367.40h1v1.80h-1zM156 367.40h1v2.17h-1zM157 367.40h1v2.57h-1zM158 367.40h1v2.42h-1zM170 367.40h1v1.43h-1zM171 367.40h1v3.72h-1zM172 367.40h1v4.04h-1zM180 367.40h1v2.25h-1zM181 367.40h1v5.38h-1zM182 367.40h1v6.17h-1zM183 367.40h1v6.26h-1zM186 367.40h1v6.04h-1zM187 367.40h1v6.40h-1zM201 367.40h1v0.82h-1zM213 367.40h1v1.62h-1zM214 367.40h1v2.34h-1zM215 367.40h1v2.95h-1zM216 367.40h1v3.17h-1zM218 367.40h1v2.81h-1zM219 367.40h1v3.85h-1zM220 367.40h1v5.88h-1zM221 367.40h1v7.30h-1zM222 367.40h1v9.43h-1zM223 367.40h1v9.61h-1zM231 367.40h1v1.54h-1zM232 367.40h1v4.37h-1zM233 367.40h1v5.27h-1zM234 367.40h1v6.45h-1zM254 367.40h1v0.60h-1zM255 367.40h1v0.61h-1zM256 367.40h1v1.05h-1zM257 367.40h1v1.55h-1zM258 367.40h1v1.82h-1zM267 367.40h1v2.98h-1zM268 367.40h1v4.98h-1zM269 367.40h1v6.98h-1zM274 367.40h1v4.07h-1zM275 367.40h1v4.48h-1zM277 367.40h1v3.63h-1zM299 367.40h1v1.92h-1zM300 367.40h1v2.37h-1zM301 367.40h1v2.90h-1zM302 367.40h1v3.22h-1zM323 367.40h1v1.01h-1zM324 367.40h1v1.18h-1zM338 367.40h1v0.73h-1zM339 367.40h1v0.84h-1zM340 367.40h1v1.56h-1zM341 367.40h1v1.75h-1zM342 367.40h1v2.80h-1zM350 367.40h1v0.50h-1zM351 367.40h1v4.00h-1zM352 367.40h1v10.15h-1zM368 367.40h1v0.48h-1zM369 367.40h1v1.54h-1zM379 367.40h1v1.70h-1zM380 367.40h1v3.43h-1zM381 367.40h1v3.93h-1zM392 367.40h1v1.95h-1zM393 367.40h1v2.96h-1zM394 367.40h1v3.67h-1zM411 367.40h1v6.87h-1zM412 367.40h1v13.45h-1zM413 367.40h1v15.51h-1zM418 367.40h1v12.48h-1zM419 367.40h1v12.04h-1zM423 367.40h1v9.84h-1zM424 367.40h1v11.31h-1zM425 367.40h1v11.93h-1zM436 367.40h1v5.83h-1zM437 367.40h1v9.13h-1zM438 367.40h1v12.53h-1zM465 367.40h1v0.93h-1zM466 367.40h1v3.33h-1zM467 367.40h1v4.64h-1zM483 367.40h1v2.05h-1zM484 367.40h1v3.72h-1zM485 367.40h1v5.77h-1zM489 367.40h1v0.47h-1zM490 367.40h1v2.23h-1zM491 367.40h1v4.27h-1zM492 367.40h1v5.04h-1zM493 367.40h1v6.94h-1zM494 367.40h1v7.53h-1zM495 367.40h1v8.41h-1zM499 367.40h1v6.67h-1zM513 367.40h1v0.95h-1zM528 367.40h1v2.20h-1zM529 367.40h1v3.08h-1zM531 367.40h1v2.07h-1zM535 367.40h1v1.04h-1zM536 367.40h1v2.20h-1zM537 367.40h1v4.84h-1zM538 367.40h1v6.18h-1zM539 367.40h1v8.64h-1zM540 367.40h1v11.24h-1zM541 367.40h1v11.88h-1zM580 367.40h1v1.02h-1zM582 367.40h1v2.18h-1zM583 367.40h1v2.47h-1zM584 367.40h1v3.47h-1zM585 367.40h1v3.61h-1zM586 367.40h1v4.21h-1zM587 367.40h1v4.93h-1zM592 367.40h1v3.81h-1zM593 367.40h1v5.51h-1zM594 367.40h1v6.59h-1zM618 367.40h1v2.94h-1zM623 367.40h1v1.79h-1zM624 367.40h1v2.08h-1zM627 367.40h1v2.23h-1zM629 367.40h1v2.23h-1zM630 367.40h1v2.35h-1zM648 367.40h1v1.96h-1zM649 367.40h1v2.61h-1zM650 367.40h1v4.62h-1zM653 367.40h1v2.16h-1zM658 367.40h1v1.87h-1zM659 367.40h1v2.14h-1zM660 367.40h1v3.24h-1zM661 367.40h1v3.86h-1zM662 367.40h1v4.43h-1zM663 367.40h1v5.26h-1zM665 367.40h1v5.82h-1zM666 367.40h1v6.06h-1zM694 367.40h1v0.84h-1zM695 367.40h1v3.41h-1zM696 367.40h1v4.30h-1zM697 367.40h1v6.00h-1zM704 367.40h1v2.69h-1zM705 367.40h1v4.71h-1zM706 367.40h1v5.46h-1zM707 367.40h1v6.96h-1zM708 367.40h1v7.33h-1zM719 367.40h1v3.97h-1zM720 367.40h1v4.29h-1zM724 367.40h1v1.63h-1zM725 367.40h1v2.93h-1zM726 367.40h1v5.05h-1zM727 367.40h1v6.79h-1zM728 367.40h1v6.86h-1zM746 367.40h1v3.12h-1zM747 367.40h1v4.45h-1z"/>
<path fill="#ffcdd2" d="M13 367.40h1v8.43h-1zM14 367.40h1v8.32h-1zM15 367.40h1v6.48h-1zM16 367.40h1v4.19h-1zM17 367.40h1v3.31h-1zM18 367.40h1v1.29h-1zM30 367.40h1v2.33h-1zM37 367.40h1v4.80h-1zM38 367.40h1v3.83h-1zM39 367.40h1v2.97h-1zM40 367.40h1v1.49h-1zM41 367.40h1v0.56h-1zM64 367.40h1v6.27h-1zM65 367.40h1v4.96h-1zM66 367.40h1v4.32h-1zM67 367.40h1v2.43h-1zM68 367.40h1v1.62h-1zM79 367.40h1v0.68h-1zM96 367.40h1v7.64h-1zM97 367.40h1v6.88h-1zM98 367.40h1v6.44h-1zM99 367.40h1v5.98h-1zM100 367.40h1v5.81h-1zM101 367.40h1v5.23h-1zM107 367.40h1v9.13h-1zM108 367.40h1v8.68h-1zM109 367.40h1v7.53h-1zM110 367.40h1v6.94h-1zM121 367.40h1v9.13h-1zM122 367.40h1v8.42h-1zM123 367.40h1v5.85h-1zM124 367.40h1v4.43h-1zM125 367.40h1v4.18h-1zM129 367.40h1v5.94h-1zM130 367.40h1v3.41h-1zM155 367.40h1v1.74h-1zM159 367.40h1v2.10h-1zM160 367.40h1v1.14h-1zM173 367.40h1v2.50h-1zM184 367.40h1v6.02h-1zM185 367.40h1v5.61h-1zM188 367.40h1v2.80h-1zM202 367.40h1v1.11h-1zM203 367.40h1v1.30h-1zM204 367.40h1v1.27h-1zM217 367.40h1v2.34h-1zM224 367.40h1v6.95h-1zM235 367.40h1v4.70h-1zM236 367.40h1v2.83h-1zM259 367.40h1v1.11h-1zM270 367.40h1v6.88h-1zM271 367.40h1v5.86h-1zM272 367.40h1v4.61h-1zM273 367.40h1v4.42h-1zM276 367.40h1v3.66h-1zM278 367.40h1v3.14h-1zM279 367.40h1v1.52h-1zM303 367.40h1v2.91h-1zM304 367.40h1v1.52h-1zM305 367.40h1v0.63h-1zM325 367.40h1v1.12h-1zM326 367.40h1v0.96h-1zM327 367.40h1v0.80h-1zM343 367.40h1v1.27h-1zM344 367.40h1v0.61h-1zM353 367.40h1v10.06h-1zM354 367.40h1v8.89h-1zM355 367.40h1v6.68h-1zM356 367.40h1v5.64h-1zM357 367.40h1v3.10h-1zM370 367.40h1v1.04h-1zM382 367.40h1v2.88h-1zM383 367.40h1v2.06h-1zM384 367.40h1v0.84h-1zM395 367.40h1v1.95h-1zM396 367.40h1v0.77h-1zM414 367.40h1v15.16h-1zM415 367.40h1v14.24h-1zM416 367.40h1v13.12h-1zM417 367.40h1v12.44h-1zM420 367.40h1v11.92h-1zM421 367.40h1v10.64h-1zM422 367.40h1v9.15h-1zM426 367.40h1v12.01h-1zM427 367.40h1v6.21h-1zM428 367.40h1v3.29h-1zM439 367.40h1v12.78h-1zM440 367.40h1v11.89h-1zM441 367.40h1v8.64h-1zM442 367.40h1v6.66h-1zM443 367.40h1v3.09h-1zM468 367.40h1v4.79h-1zM469 367.40h1v3.45h-1zM486 367.40h1v2.50h-1zM496 367.40h1v8.11h-1zM497 367.40h1v7.66h-1zM498 367.40h1v6.63h-1zM500 367.40h1v6.31h-1zM501 367.40h1v6.09h-1zM502 367.40h1v5.57h-1zM503 367.40h1v4.29h-1zM504 367.40h1v3.84h-1zM505 367.40h1v2.20h-1zM506 367.40h1v1.76h-1zM530 367.40h1v1.96h-1zM532 367.40h1v2.13h-1zM533 367.40h1v1.47h-1zM534 367.40h1v0.58h-1zM542 367.40h1v10.47h-1zM543 367.40h1v9.20h-1zM544 367.40h1v6.64h-1zM545 367.40h1v4.66h-1zM546 367.40h1v3.76h-1zM547 367.40h1v1.86h-1zM548 367.40h1v1.29h-1zM549 367.40h1v0.77h-1zM581 367.40h1v1.50h-1zM588 367.40h1v4.74h-1zM589 367.40h1v4.32h-1zM590 367.40h1v3.82h-1zM591 367.40h1v3.14h-1zM595 367.40h1v6.29h-1zM596 367.40h1v4.50h-1zM597 367.40h1v3.59h-1zM619 367.40h1v2.21h-1zM620 367.40h1v2.10h-1zM621 367.40h1v1.83h-1zM622 367.40h1v1.53h-1zM625 367.40h1v2.35h-1zM626 367.40h1v2.12h-1zM628 367.40h1v1.90h-1zM631 367.40h1v2.43h-1zM632 367.40h1v2.18h-1zM633 367.40h1v2.06h-1zM634 367.40h1v1.89h-1zM635 367.40h1v0.92h-1zM651 367.40h1v2.90h-1zM652 367.40h1v2.17h-1zM654 367.40h1v1.79h-1zM664 367.40h1v5.24h-1zM667 367.40h1v5.31h-1zM668 367.40h1v3.55h-1zM669 367.40h1v2.60h-1zM698 367.40h1v5.77h-1zM699 367.40h1v2.68h-1zM709 367.40h1v5.89h-1zM710 367.40h1v4.47h-1zM711 367.40h1v3.35h-1zM712 367.40h1v1.91h-1zM713 367.40h1v0.84h-1zM721 367.40h1v3.42h-1zM722 367.40h1v1.91h-1zM723 367.40h1v1.08h-1zM729 367.40h1v5.98h-1zM730 367.40h1v5.49h-1zM731 367.40h1v3.97h-1zM732 367.40h1v1.90h-1zM733 367.40h1v0.87h-1zM748 367.40h1v3.97h-1zM749 367.40h1v3.31h-1zM750 367.40h1v2.76h-1zM751 367.40h1v1.13h-1z"/>
<path fill="#26a69a" d="M20 366.01h1v1.39h-1zM21 365.09h1v2.31h-1zM22 364.57h1v2.83h-1zM23 364.20h1v3.20h-1zM24 364.04h1v3.36h-1zM32 363.26h1v4.14h-1zM33 362.65h1v4.75h-1zM42 366.21h1v1.19h-1zM43 365.21h1v2.19h-1zM44 364.91h1v2.49h-1zM45 363.66h1v3.74h-1zM46 362.97h1v4.43h-1zM49 365.09h1v2.31h-1zM50 363.39h1v4.01h-1zM51 362.22h1v5.18h-1zM52 361.68h1v5.72h-1zM53 360.73h1v6.67h-1zM54 360.35h1v7.05h-1zM70 365.61h1v1.79h-1zM71 365.44h1v1.96h-1zM80 358.14h1v9.26h-1zM81 353.51h1v13.89h-1zM82 347.32h1v20.08h-1zM83 346.86h1v20.54h-1zM131 366.42h1v0.98h-1zM132 365.57h1v1.83h-1zM133 363.55h1v3.85h-1zM134 361.30h1v6.10h-1zM135 360.38h1v7.02h-1zM136 358.47h1v8.93h-1zM137 358.08h1v9.32h-1zM139 358.39h1v9.01h-1zM142 358.64h1v8.76h-1zM163 366.24h1v1.16h-1zM164 366.06h1v1.34h-1zM165 365.56h1v1.84h-1zM166 365.59h1v1.81h-1zM167 365.28h1v2.12h-1zM168 364.91h1v2.49h-1zM176 365.52h1v1.88h-1zM190 364.57h1v2.83h-1zM191 363.44h1v3.96h-1zM192 360.81h1v6.59h-1zM193 360.10h1v7.30h-1zM194 359.91h1v7.49h-1zM206 366.61h1v0.79h-1zM207 365.24h1v2.16h-1zM208 364.27h1v3.13h-1zM209 363.64h1v3.76h-1zM226 363.95h1v3.45h-1zM237 365.59h1v1.81h-1zM238 363.77h1v3.63h-1zM239 361.67h1v5.73h-1zM247 365.00h1v2.40h-1zM261 366.44h1v0.96h-1zM262 366.07h1v1.33h-1zM263 365.98h1v1.42h-1zM281 365.83h1v1.57h-1zM282 365.52h1v1.88h-1zM283 363.98h1v3.42h-1zM284 362.63h1v4.77h-1zM285 362.38h1v5.02h-1zM286 361.51h1v5.89h-1zM312 366.67h1v0.73h-1zM313 365.92h1v1.48h-1zM314 365.70h1v1.70h-1zM315 365.64h1v1.76h-1zM317 365.30h1v2.10h-1zM319 365.42h1v1.98h-1zM328 366.90h1v0.50h-1zM329 366.39h1v1.01h-1zM330 365.57h1v1.83h-1zM331 364.96h1v2.44h-1zM332 364.75h1v2.65h-1zM333 364.68h1v2.72h-1zM334 364.41h1v2.99h-1zM345 365.44h1v1.96h-1zM346 362.71h1v4.69h-1zM347 361.34h1v6.06h-1zM359 366.45h1v0.95h-1zM360 366.23h1v1.17h-1zM361 366.08h1v1.32h-1zM363 366.17h1v1.23h-1zM364 365.22h1v2.18h-1zM373 366.64h1v0.76h-1zM376 366.39h1v1.01h-1zM385 366.61h1v0.79h-1zM386 365.98h1v1.42h-1zM387 365.36h1v2.04h-1zM388 364.94h1v2.46h-1zM397 363.87h1v3.53h-1zM398 360.79h1v6.61h-1zM399 354.13h1v13.27h-1zM400 351.06h1v16.34h-1zM401 350.70h1v16.70h-1zM430 365.81h1v1.59h-1zM434 364.56h1v2.84h-1zM444 366.47h1v0.93h-1zM445 365.54h1v1.86h-1zM446 363.08h1v4.32h-1zM447 362.16h1v5.24h-1zM449 362.13h1v5.27h-1zM450 362.03h1v5.37h-1zM451 362.09h1v5.31h-1zM452 361.72h1v5.68h-1zM453 361.71h1v5.69h-1zM454 361.61h1v5.79h-1zM456 361.46h1v5.94h-1zM457 361.28h1v6.12h-1zM458 360.93h1v6.47h-1zM462 362.56h1v4.84h-1zM475 363.22h1v4.18h-1zM476 359.82h1v7.58h-1zM477 358.53h1v8.87h-1zM478 357.17h1v10.23h-1zM479 356.64h1v10.76h-1zM508 366.83h1v0.57h-1zM509 366.55h1v0.85h-1zM510 365.50h1v1.90h-1zM511 365.03h1v2.37h-1zM515 366.62h1v0.78h-1zM516 365.57h1v1.83h-1zM517 363.22h1v4.18h-1zM521 364.55h1v2.85h-1zM550 365.46h1v1.94h-1zM551 364.36h1v3.04h-1zM552 362.62h1v4.78h-1zM553 362.11h1v5.29h-1zM555 361.93h1v5.47h-1zM556 361.33h1v6.07h-1zM557 360.17h1v7.23h-1zM558 359.75h1v7.65h-1zM567 366.69h1v0.71h-1zM571 366.51h1v0.89h-1zM572 365.41h1v1.99h-1zM573 365.14h1v2.26h-1zM574 364.82h1v2.58h-1zM575 364.55h1v2.85h-1zM598 365.42h1v1.98h-1zM599 364.28h1v3.12h-1zM600 364.04h1v3.36h-1zM601 363.75h1v3.65h-1zM604 363.97h1v3.43h-1zM605 363.73h1v3.67h-1zM606 363.13h1v4.27h-1zM607 362.39h1v5.01h-1zM608 361.19h1v6.21h-1zM636 366.63h1v0.77h-1zM637 366.42h1v0.98h-1zM638 365.23h1v2.17h-1zM639 364.41h1v2.99h-1zM640 363.14h1v4.26h-1zM655 366.53h1v0.87h-1zM656 365.02h1v2.38h-1zM671 365.10h1v2.30h-1zM672 363.83h1v3.57h-1zM674 363.45h1v3.95h-1zM675 363.93h1v3.47h-1zM677 363.66h1v3.74h-1zM678 361.67h1v5.73h-1zM679 360.68h1v6.72h-1zM680 360.13h1v7.27h-1zM689 365.05h1v2.35h-1zM690 363.99h1v3.41h-1zM691 363.84h1v3.56h-1zM701 366.46h1v0.94h-1zM714 366.29h1v1.11h-1zM715 365.85h1v1.55h-1zM734 365.31h1v2.09h-1zM735 363.39h1v4.01h-1zM736 360.72h1v6.68h-1zM737 359.13h1v8.27h-1zM738 358.45h1v8.95h-1zM753 365.80h1v1.60h-1zM754 364.42h1v2.98h-1zM755 364.11h1v3.29h-1z"/>
<path fill="#b2dfdb" d="M25 364.52h1v2.88h-1zM26 366.16h1v1.24h-1zM34 365.88h1v1.52h-1zM47 363.93h1v3.47h-1zM48 365.50h1v1.90h-1zM55 361.27h1v6.13h-1zM56 362.22h1v5.18h-1zM57 364.74h1v2.66h-1zM72 365.95h1v1.45h-1zM73 366.12h1v1.28h-1zM74 366.60h1v0.80h-1zM84 350.38h1v17.02h-1zM85 358.20h1v9.20h-1zM86 361.71h1v5.69h-1zM112 364.44h1v2.96h-1zM113 365.03h1v2.37h-1zM114 366.54h1v0.86h-1zM115 366.92h1v0.48h-1zM138 358.59h1v8.81h-1zM140 358.54h1v8.86h-1zM141 358.78h1v8.62h-1zM143 359.86h1v7.54h-1zM144 361.14h1v6.26h-1zM145 361.72h1v5.68h-1zM146 363.08h1v4.32h-1zM147 363.67h1v3.73h-1zM148 364.70h1v2.70h-1zM149 365.36h1v2.04h-1zM150 366.22h1v1.18h-1zM151 366.59h1v0.81h-1zM169 365.71h1v1.69h-1zM175 366.29h1v1.11h-1zM177 365.84h1v1.56h-1zM178 366.23h1v1.17h-1zM179 366.66h1v0.74h-1zM195 360.34h1v7.06h-1zM196 360.91h1v6.49h-1zM197 362.95h1v4.45h-1zM198 364.54h1v2.86h-1zM199 365.75h1v1.65h-1zM210 364.00h1v3.40h-1zM211 364.62h1v2.78h-1zM227 363.57h1v3.83h-1zM228 364.86h1v2.54h-1zM229 365.46h1v1.94h-1zM240 361.49h1v5.91h-1zM241 362.26h1v5.14h-1zM242 363.10h1v4.30h-1zM243 363.27h1v4.13h-1zM244 364.14h1v3.26h-1zM245 364.77h1v2.63h-1zM246 365.00h1v2.40h-1zM248 365.34h1v2.06h-1zM249 365.51h1v1.89h-1zM250 365.62h1v1.78h-1zM251 365.69h1v1.71h-1zM252 366.29h1v1.11h-1zM253 366.67h1v0.73h-1zM264 366.43h1v0.97h-1zM265 366.70h1v0.70h-1zM287 361.53h1v5.87h-1zM288 362.79h1v4.61h-1zM289 363.94h1v3.46h-1zM290 364.28h1v3.12h-1zM291 364.93h1v2.47h-1zM292 364.95h1v2.45h-1zM293 365.38h1v2.02h-1zM294 365.68h1v1.72h-1zM295 365.92h1v1.48h-1zM296 366.44h1v0.96h-1zM297 366.54h1v0.86h-1zM316 365.64h1v1.76h-1zM318 365.64h1v1.76h-1zM320 365.98h1v1.42h-1zM321 366.79h1v0.61h-1zM335 364.25h1v3.15h-1zM336 364.62h1v2.78h-1zM337 366.21h1v1.19h-1zM348 363.19h1v4.21h-1zM349 363.42h1v3.98h-1zM362 366.33h1v1.07h-1zM365 364.82h1v2.58h-1zM366 364.84h1v2.56h-1zM367 365.48h1v1.92h-1zM374 366.38h1v1.02h-1zM375 366.40h1v1.00h-1zM377 366.85h1v0.55h-1zM389 365.69h1v1.71h-1zM402 350.34h1v17.06h-1zM403 350.77h1v16.63h-1zM404 354.27h1v13.13h-1zM405 355.97h1v11.43h-1zM406 358.84h1v8.56h-1zM407 361.45h1v5.95h-1zM408 363.12h1v4.28h-1zM409 365.91h1v1.49h-1zM431 364.18h1v3.22h-1zM432 364.08h1v3.32h-1zM433 364.09h1v3.31h-1zM435 365.79h1v1.61h-1zM448 362.22h1v5.18h-1zM455 361.68h1v5.72h-1zM459 361.57h1v5.83h-1zM460 361.76h1v5.64h-1zM461 362.60h1v4.80h-1zM463 363.78h1v3.62h-1zM464 366.45h1v0.95h-1zM480 360.26h1v7.14h-1zM481 364.54h1v2.86h-1zM482 366.42h1v0.98h-1zM518 364.04h1v3.36h-1zM519 364.93h1v2.47h-1zM520 365.16h1v2.24h-1zM522 364.20h1v3.20h-1zM523 365.01h1v2.39h-1zM524 365.26h1v2.14h-1zM525 365.00h1v2.40h-1zM526 365.49h1v1.91h-1zM527 366.60h1v0.80h-1zM554 362.50h1v4.90h-1zM559 360.00h1v7.40h-1zM560 361.08h1v6.32h-1zM561 361.60h1v5.80h-1zM562 363.37h1v4.03h-1zM563 364.19h1v3.21h-1zM564 366.03h1v1.37h-1zM565 366.40h1v1.00h-1zM576 364.63h1v2.77h-1zM577 365.60h1v1.80h-1zM578 366.26h1v1.14h-1zM602 363.82h1v3.58h-1zM603 364.08h1v3.32h-1zM609 361.66h1v5.74h-1zM610 362.09h1v5.31h-1zM611 363.55h1v3.85h-1zM612 363.87h1v3.53h-1zM613 364.96h1v2.44h-1zM614 365.83h1v1.57h-1zM615 366.27h1v1.13h-1zM616 366.69h1v0.71h-1zM641 362.78h1v4.62h-1zM642 363.31h1v4.09h-1zM643 364.19h1v3.21h-1zM644 364.45h1v2.95h-1zM645 365.00h1v2.40h-1zM646 366.17h1v1.23h-1zM647 366.79h1v0.61h-1zM657 364.90h1v2.50h-1zM673 363.60h1v3.80h-1zM676 364.17h1v3.23h-1zM681 360.57h1v6.83h-1zM682 361.36h1v6.04h-1zM683 363.04h1v4.36h-1zM684 363.68h1v3.72h-1zM685 365.05h1v2.35h-1zM686 365.88h1v1.52h-1zM692 364.46h1v2.94h-1zM693 365.88h1v1.52h-1zM716 366.11h1v1.29h-1zM739 358.48h1v8.92h-1zM740 359.33h1v8.07h-1zM741 361.34h1v6.06h-1zM742 363.17h1v4.23h-1zM743 364.57h1v2.83h-1zM744 366.53h1v0.87h-1z"/>
</g>
<path d="M8.00 367.71C8.34 368.96 9.38 372.73 10.01 375.24C10.64 377.75 11.05 380.68 11.76 382.77C12.47 384.86 13.43 387.15 14.27 387.78C15.11 388.41 15.94 387.36 16.78 386.53C17.62 385.69 18.45 384.02 19.29 382.77C20.13 381.51 20.96 380.05 21.80 379.00C22.64 377.95 23.47 376.28 24.31 376.49C25.14 376.70 25.97 379.42 26.81 380.26C27.64 381.10 28.48 381.93 29.32 381.51C30.16 381.09 31.12 378.80 31.83 377.75C32.54 376.70 32.96 374.82 33.59 375.24C34.22 375.66 34.84 378.59 35.59 380.26C36.34 381.93 37.35 384.35 38.10 385.27C38.85 386.19 39.36 386.41 40.11 385.78C40.86 385.15 41.70 383.06 42.62 381.51C43.54 379.96 44.71 377.95 45.63 376.49C46.55 375.03 47.39 374.61 48.14 372.73C48.89 370.85 49.39 367.72 50.14 365.21C50.89 362.70 51.81 359.35 52.65 357.68C53.49 356.01 54.32 355.38 55.16 355.17C56.00 354.96 56.83 355.38 57.67 356.43C58.51 357.48 59.34 358.93 60.18 361.44C61.02 363.95 61.85 368.76 62.69 371.48C63.52 374.20 64.27 377.12 65.19 377.75C66.11 378.38 67.20 376.08 68.21 375.24C69.21 374.40 70.30 373.36 71.22 372.73C72.14 372.10 72.97 371.81 73.72 371.48C74.47 371.15 75.14 369.05 75.73 370.72C76.32 372.39 76.74 381.80 77.24 381.51C77.74 381.22 78.24 374.20 78.74 368.97C79.24 363.74 79.75 356.63 80.25 350.15C80.75 343.67 81.25 335.11 81.75 330.09C82.25 325.07 82.80 321.93 83.26 320.05C83.72 318.17 84.09 318.17 84.51 318.80C84.93 319.43 85.31 321.93 85.77 323.81C86.23 325.69 86.77 328.00 87.27 330.09C87.77 332.18 88.19 334.27 88.78 336.36C89.37 338.45 90.03 340.33 90.78 342.63C91.53 344.93 92.45 348.27 93.29 350.15C94.13 352.03 94.96 352.67 95.80 353.92C96.64 355.18 97.47 356.43 98.31 357.68C99.15 358.93 100.07 359.77 100.82 361.44C101.57 363.11 102.07 364.57 102.82 367.71C103.57 370.85 104.49 377.25 105.33 380.26C106.17 383.27 107.00 385.36 107.84 385.78C108.68 386.20 109.64 384.32 110.35 382.77C111.06 381.22 111.51 377.12 112.10 376.49C112.69 375.86 113.23 378.79 113.86 379.00C114.49 379.21 115.20 377.54 115.87 377.75C116.54 377.96 117.24 378.80 117.87 380.26C118.50 381.72 119.04 384.65 119.63 386.53C120.22 388.41 120.76 389.04 121.39 391.55C122.02 394.06 122.64 398.44 123.39 401.58C124.14 404.71 125.06 408.48 125.90 410.36C126.74 412.24 127.70 412.37 128.41 412.87C129.12 413.37 129.54 413.79 130.17 413.37C130.80 412.95 131.42 412.54 132.17 410.36C132.92 408.19 133.84 404.08 134.68 400.32C135.52 396.56 136.35 391.54 137.19 387.78C138.03 384.02 138.86 380.88 139.70 377.75C140.54 374.62 141.37 371.27 142.21 368.97C143.05 366.67 143.88 365.20 144.72 363.95C145.56 362.69 146.38 361.86 147.22 361.44C148.06 361.02 148.77 361.15 149.73 361.44C150.69 361.73 151.94 362.57 152.99 363.20C154.04 363.83 155.08 364.54 156.00 365.21C156.92 365.88 157.59 367.00 158.51 367.21C159.43 367.42 160.48 366.79 161.52 366.46C162.56 366.13 163.69 365.50 164.78 365.21C165.87 364.92 167.09 364.07 168.05 364.70C169.01 365.33 169.72 368.47 170.55 368.97C171.39 369.47 172.22 368.34 173.06 367.71C173.90 367.08 174.73 365.63 175.57 365.21C176.41 364.79 177.37 364.38 178.08 365.21C178.79 366.04 179.25 368.34 179.84 370.22C180.43 372.10 180.96 374.82 181.59 376.49C182.22 378.16 182.85 378.59 183.60 380.26C184.35 381.93 185.36 385.28 186.11 386.53C186.86 387.78 187.36 388.41 188.11 387.78C188.86 387.15 189.78 384.86 190.62 382.77C191.46 380.68 192.29 377.75 193.13 375.24C193.97 372.73 194.80 369.47 195.64 367.71C196.48 365.95 197.31 364.91 198.15 364.70C198.99 364.49 199.82 365.75 200.66 366.46C201.50 367.17 202.25 369.18 203.17 368.97C204.09 368.76 205.26 366.05 206.18 365.21C207.10 364.37 207.76 364.03 208.68 363.95C209.60 363.87 210.77 364.28 211.69 364.70C212.61 365.12 213.36 365.75 214.20 366.46C215.04 367.17 215.87 368.13 216.71 368.97C217.55 369.81 218.47 369.60 219.22 371.48C219.97 373.36 220.56 378.05 221.23 380.26C221.90 382.47 222.56 384.35 223.23 384.77C223.90 385.19 224.44 384.36 225.24 382.77C226.04 381.18 227.51 376.50 228.00 375.24C228.49 373.99 227.81 374.82 228.15 375.24C228.49 375.66 229.41 376.70 230.01 377.75C230.61 378.80 231.17 380.46 231.76 381.51C232.34 382.56 232.89 384.23 233.52 384.02C234.15 383.81 234.86 381.93 235.53 380.26C236.20 378.59 236.78 376.08 237.53 373.99C238.28 371.90 239.20 369.17 240.04 367.71C240.88 366.25 241.71 365.71 242.55 365.21C243.39 364.71 244.22 365.12 245.06 364.70C245.90 364.28 246.73 363.66 247.57 362.70C248.41 361.74 249.25 359.77 250.08 358.93C250.92 358.09 251.75 357.68 252.58 357.68C253.42 357.68 254.25 358.51 255.09 358.93C255.93 359.35 256.76 360.06 257.60 360.19C258.44 360.32 259.27 359.98 260.11 359.69C260.95 359.40 261.78 358.68 262.62 358.43C263.46 358.18 264.29 357.89 265.13 358.18C265.97 358.47 266.93 358.81 267.64 360.19C268.35 361.57 268.68 364.16 269.39 366.46C270.10 368.76 271.06 371.90 271.90 373.99C272.74 376.08 273.57 377.62 274.41 379.00C275.25 380.38 276.08 381.84 276.92 382.26C277.76 382.68 278.60 382.26 279.43 381.51C280.26 380.76 281.10 379.21 281.93 377.75C282.76 376.29 283.60 374.82 284.44 372.73C285.28 370.64 286.11 366.97 286.95 365.21C287.79 363.45 288.62 362.82 289.46 362.19C290.30 361.56 291.13 361.86 291.97 361.44C292.81 361.02 293.64 359.90 294.48 359.69C295.32 359.48 296.16 359.48 296.99 360.19C297.82 360.90 298.66 362.90 299.49 363.95C300.32 365.00 301.16 365.75 302.00 366.46C302.84 367.17 303.67 367.68 304.51 368.22C305.35 368.76 306.18 369.60 307.02 369.72C307.86 369.85 308.69 369.51 309.53 368.97C310.37 368.43 311.20 367.42 312.04 366.46C312.88 365.50 313.72 364.33 314.55 363.20C315.38 362.07 316.22 360.53 317.05 359.69C317.88 358.85 318.72 358.31 319.56 358.18C320.40 358.05 321.23 358.68 322.07 358.93C322.91 359.18 323.74 359.90 324.58 359.69C325.42 359.48 326.25 358.43 327.09 357.68C327.93 356.93 328.76 356.01 329.60 355.17C330.44 354.33 331.27 353.50 332.10 352.66C332.94 351.82 333.77 350.65 334.61 350.15C335.45 349.65 336.28 349.44 337.12 349.65C337.96 349.86 338.79 350.83 339.63 351.41C340.47 352.00 341.43 353.16 342.14 353.16C342.85 353.16 343.27 352.96 343.90 351.41C344.53 349.86 345.23 345.55 345.90 343.88C346.57 342.21 347.33 341.58 347.91 341.37C348.50 341.16 348.99 341.17 349.41 342.63C349.83 344.09 349.96 347.22 350.42 350.15C350.88 353.08 351.46 357.47 352.17 360.19C352.88 362.91 353.84 365.21 354.68 366.46C355.52 367.71 356.35 368.13 357.19 367.71C358.03 367.29 358.86 364.70 359.70 363.95C360.54 363.20 361.37 363.91 362.21 363.20C363.05 362.49 364.01 360.40 364.72 359.69C365.43 358.98 365.84 358.51 366.47 358.93C367.10 359.35 367.73 361.77 368.48 362.19C369.23 362.61 370.15 361.86 370.99 361.44C371.83 361.02 372.67 360.11 373.50 359.69C374.33 359.27 375.17 358.64 376.00 358.93C376.83 359.22 377.67 360.39 378.51 361.44C379.35 362.49 380.18 364.37 381.02 365.21C381.86 366.05 382.78 366.88 383.53 366.46C384.28 366.04 384.79 363.66 385.54 362.70C386.29 361.74 387.22 361.02 388.05 360.69C388.88 360.36 389.72 360.15 390.55 360.69C391.38 361.23 392.35 362.78 393.06 363.95C393.77 365.12 394.24 367.50 394.82 367.71C395.40 367.92 396.03 368.14 396.57 365.21C397.11 362.28 397.58 355.59 398.08 350.15C398.58 344.71 399.08 337.81 399.58 332.59C400.08 327.37 400.59 322.77 401.09 318.80C401.59 314.83 402.10 311.27 402.60 308.76C403.10 306.25 403.60 304.88 404.10 303.75C404.60 302.62 405.11 302.12 405.61 301.99C406.11 301.86 406.61 302.28 407.11 302.99C407.61 303.70 408.12 304.66 408.62 306.25C409.12 307.84 409.62 309.81 410.12 312.53C410.62 315.25 411.13 319.22 411.63 322.56C412.13 325.90 412.59 329.25 413.13 332.59C413.67 335.93 414.31 339.49 414.89 342.63C415.47 345.77 416.01 348.48 416.64 351.41C417.27 354.34 417.90 357.47 418.65 360.19C419.40 362.91 420.32 365.20 421.16 367.71C422.00 370.22 422.92 372.31 423.67 375.24C424.42 378.17 425.17 383.18 425.67 385.27C426.17 387.36 426.26 388.61 426.68 387.78C427.10 386.94 427.51 382.35 428.18 380.26C428.85 378.17 429.85 376.50 430.69 375.24C431.53 373.99 432.49 373.15 433.20 372.73C433.91 372.31 434.46 371.48 434.96 372.73C435.46 373.99 435.67 376.50 436.21 380.26C436.75 384.02 437.55 391.34 438.22 395.31C438.89 399.28 439.59 402.00 440.22 404.09C440.85 406.18 441.39 407.64 441.98 407.85C442.57 408.06 443.11 406.80 443.74 405.34C444.37 403.88 445.03 401.16 445.74 399.07C446.45 396.98 447.60 394.05 448.00 392.80C448.40 391.55 447.73 393.01 448.15 391.55C448.57 390.09 449.70 386.53 450.51 384.02C451.32 381.51 452.18 379.00 453.02 376.49C453.86 373.98 454.69 371.27 455.53 368.97C456.36 366.67 457.19 364.37 458.03 362.70C458.87 361.03 459.79 359.85 460.54 358.93C461.29 358.01 461.92 356.97 462.55 357.18C463.18 357.39 463.73 358.64 464.31 360.19C464.89 361.74 465.43 365.00 466.06 366.46C466.69 367.92 467.32 368.43 468.07 368.97C468.82 369.51 469.83 369.43 470.58 369.72C471.33 370.01 472.00 371.47 472.58 370.72C473.16 369.97 473.59 368.22 474.09 365.21C474.59 362.20 475.09 356.00 475.59 352.66C476.09 349.32 476.60 347.15 477.10 345.14C477.60 343.13 478.10 341.25 478.60 340.62C479.10 339.99 479.56 340.62 480.11 341.37C480.66 342.12 481.29 343.68 481.87 345.14C482.45 346.60 483.08 348.81 483.62 350.15C484.16 351.49 484.59 352.95 485.13 353.16C485.67 353.37 486.30 351.79 486.88 351.41C487.46 351.04 488.01 350.70 488.64 350.91C489.27 351.12 489.98 351.53 490.65 352.66C491.32 353.79 492.02 355.38 492.65 357.68C493.28 359.98 493.83 363.53 494.41 366.46C495.00 369.39 495.53 372.94 496.16 375.24C496.79 377.54 497.42 378.59 498.17 380.26C498.92 381.93 499.84 383.93 500.68 385.27C501.52 386.61 502.35 388.07 503.19 388.28C504.03 388.49 504.86 387.24 505.70 386.53C506.54 385.82 507.38 384.86 508.21 384.02C509.04 383.18 509.96 381.63 510.71 381.51C511.46 381.38 512.05 383.06 512.72 383.27C513.39 383.48 514.02 383.48 514.73 382.77C515.44 382.06 516.20 380.25 516.99 379.00C517.78 377.75 518.65 376.29 519.49 375.24C520.33 374.19 521.16 373.36 522.00 372.73C522.84 372.10 523.67 371.56 524.51 371.48C525.35 371.40 526.31 371.69 527.02 372.23C527.73 372.77 528.15 374.24 528.78 374.74C529.41 375.24 530.03 375.07 530.78 375.24C531.53 375.41 532.54 375.32 533.29 375.74C534.04 376.16 534.67 376.16 535.30 377.75C535.93 379.34 536.46 382.34 537.05 385.27C537.63 388.20 538.18 392.38 538.81 395.31C539.44 398.24 540.15 401.07 540.82 402.83C541.49 404.58 542.07 405.42 542.82 405.84C543.57 406.26 544.49 405.63 545.33 405.34C546.17 405.05 547.00 405.13 547.84 404.09C548.68 403.04 549.51 400.74 550.35 399.07C551.19 397.40 552.02 395.93 552.86 394.05C553.70 392.17 554.53 390.08 555.37 387.78C556.21 385.48 557.03 382.56 557.87 380.26C558.71 377.96 559.63 375.45 560.38 373.99C561.13 372.53 561.68 371.69 562.39 371.48C563.10 371.27 563.86 372.52 564.65 372.73C565.44 372.94 566.32 372.65 567.16 372.73C568.00 372.81 568.82 373.65 569.66 373.23C570.50 372.81 571.33 371.35 572.17 370.22C573.01 369.09 573.84 367.29 574.68 366.46C575.52 365.62 576.35 365.00 577.19 365.21C578.03 365.42 578.86 366.66 579.70 367.71C580.54 368.75 581.37 370.23 582.21 371.48C583.05 372.74 583.88 373.99 584.72 375.24C585.56 376.49 586.38 378.16 587.22 379.00C588.06 379.84 588.89 379.42 589.73 380.26C590.57 381.10 591.40 382.56 592.24 384.02C593.08 385.48 593.91 388.20 594.75 389.04C595.59 389.88 596.42 390.30 597.26 389.04C598.10 387.79 598.93 383.39 599.77 381.51C600.61 379.63 601.44 378.80 602.28 377.75C603.12 376.70 603.94 376.70 604.78 375.24C605.62 373.78 606.45 370.85 607.29 368.97C608.13 367.09 608.96 365.08 609.80 363.95C610.64 362.82 611.47 362.61 612.31 362.19C613.15 361.77 613.98 361.27 614.82 361.44C615.66 361.61 616.49 362.49 617.33 363.20C618.17 363.91 619.00 364.96 619.84 365.71C620.68 366.46 621.50 367.04 622.34 367.71C623.18 368.38 624.01 368.97 624.85 369.72C625.69 370.47 626.52 371.52 627.36 372.23C628.20 372.94 629.03 373.57 629.87 373.99C630.71 374.41 631.54 374.74 632.38 374.74C633.22 374.74 634.05 374.66 634.89 373.99C635.73 373.32 636.56 372.39 637.40 370.72C638.24 369.05 639.06 365.79 639.90 363.95C640.74 362.11 641.57 360.53 642.41 359.69C643.25 358.85 644.08 358.64 644.92 358.93C645.76 359.22 646.59 360.39 647.43 361.44C648.27 362.49 649.10 364.37 649.94 365.21C650.78 366.05 651.74 366.67 652.45 366.46C653.16 366.25 653.57 364.66 654.20 363.95C654.83 363.24 655.54 361.98 656.21 362.19C656.88 362.40 657.75 364.50 658.22 365.21C658.69 365.92 658.46 365.71 659.01 366.46C659.56 367.21 660.68 368.68 661.52 369.72C662.36 370.77 663.18 371.73 664.02 372.73C664.86 373.73 665.82 374.99 666.53 375.74C667.24 376.49 667.70 377.54 668.29 377.25C668.88 376.96 669.41 375.37 670.04 373.99C670.67 372.61 671.38 370.23 672.05 368.97C672.72 367.72 673.39 367.17 674.06 366.46C674.73 365.75 675.39 366.37 676.06 364.70C676.73 363.03 677.40 358.86 678.07 356.43C678.74 354.00 679.41 351.61 680.08 350.15C680.75 348.69 681.42 348.15 682.09 347.65C682.76 347.15 683.42 347.06 684.09 347.14C684.76 347.22 685.43 348.27 686.10 348.15C686.77 348.02 687.44 347.31 688.11 346.39C688.78 345.47 689.44 343.76 690.11 342.63C690.78 341.50 691.53 339.70 692.12 339.62C692.71 339.54 693.12 341.00 693.62 342.13C694.12 343.26 694.63 344.97 695.13 346.39C695.63 347.81 696.14 349.82 696.64 350.66C697.14 351.50 697.64 351.91 698.14 351.41C698.64 350.91 699.15 348.49 699.65 347.65C700.15 346.81 700.65 346.31 701.15 346.39C701.65 346.47 702.07 346.89 702.66 348.15C703.25 349.40 703.99 351.83 704.66 353.92C705.33 356.01 706.00 358.81 706.67 360.69C707.34 362.57 708.01 364.25 708.68 365.21C709.35 366.17 710.01 366.96 710.68 366.46C711.35 365.96 712.02 363.32 712.69 362.19C713.36 361.06 714.03 360.11 714.70 359.69C715.37 359.27 716.03 358.98 716.70 359.69C717.37 360.40 718.04 363.03 718.71 363.95C719.38 364.87 720.05 364.58 720.72 365.21C721.39 365.84 722.05 366.46 722.72 367.71C723.39 368.96 724.06 370.85 724.73 372.73C725.40 374.61 726.07 377.24 726.74 379.00C727.41 380.76 728.07 382.43 728.74 383.27C729.41 384.11 730.08 384.52 730.75 384.02C731.42 383.52 732.09 382.14 732.76 380.26C733.43 378.38 734.18 375.45 734.77 372.73C735.36 370.01 735.77 366.25 736.27 363.95C736.77 361.65 737.19 359.77 737.78 358.93C738.37 358.09 739.11 358.72 739.78 358.93C740.45 359.14 741.12 359.48 741.79 360.19C742.46 360.90 743.13 361.74 743.80 363.20C744.47 364.66 745.13 367.38 745.80 368.97C746.47 370.56 747.14 372.02 747.81 372.73C748.48 373.44 749.15 373.23 749.82 373.23C750.49 373.23 751.24 373.15 751.82 372.73C752.41 372.31 752.83 371.22 753.33 370.72C753.83 370.22 754.58 369.89 754.83 369.72" fill="none" stroke="#2962ff" stroke-width="1.4" stroke-linejoin="round"/>
<path d="M8.00 358.18C8.34 359.35 9.38 362.37 10.01 365.21C10.64 368.05 11.05 372.31 11.76 375.24C12.47 378.17 13.43 381.10 14.27 382.77C15.11 384.44 15.94 385.06 16.78 385.27C17.62 385.48 18.45 384.65 19.29 384.02C20.13 383.39 20.96 382.35 21.80 381.51C22.64 380.67 23.47 379.63 24.31 379.00C25.14 378.37 25.97 377.62 26.81 377.75C27.64 377.88 28.48 379.33 29.32 379.75C30.16 380.17 30.99 380.38 31.83 380.26C32.67 380.13 33.50 379.00 34.34 379.00C35.18 379.00 36.01 379.30 36.85 380.26C37.69 381.22 38.52 384.14 39.36 384.77C40.20 385.40 41.03 384.77 41.87 384.02C42.70 383.27 43.53 381.31 44.37 380.26C45.20 379.21 46.04 379.21 46.88 377.75C47.72 376.29 48.55 373.78 49.39 371.48C50.23 369.18 51.06 365.91 51.90 363.95C52.74 361.99 53.57 360.74 54.41 359.69C55.25 358.64 56.08 357.81 56.92 357.68C57.76 357.55 58.59 357.68 59.43 358.93C60.27 360.19 61.09 362.91 61.93 365.21C62.77 367.51 63.60 371.14 64.44 372.73C65.28 374.32 66.11 374.53 66.95 374.74C67.79 374.95 68.62 374.32 69.46 373.99C70.30 373.66 71.13 373.28 71.97 372.73C72.81 372.19 73.64 370.80 74.48 370.72C75.32 370.64 76.24 371.90 76.99 372.23C77.74 372.56 78.36 375.57 78.99 372.73C79.62 369.89 80.12 361.02 80.75 355.17C81.38 349.32 82.08 341.88 82.75 337.61C83.42 333.35 84.05 331.13 84.76 329.58C85.47 328.03 86.22 328.25 87.02 328.33C87.81 328.41 88.69 328.54 89.53 330.09C90.37 331.64 91.20 335.10 92.04 337.61C92.88 340.12 93.72 342.84 94.55 345.14C95.38 347.44 96.22 349.74 97.05 351.41C97.88 353.08 98.72 353.92 99.56 355.17C100.40 356.42 101.23 356.84 102.07 358.93C102.91 361.02 103.74 364.99 104.58 367.71C105.42 370.43 106.25 373.15 107.09 375.24C107.93 377.33 108.77 379.63 109.60 380.26C110.43 380.89 111.26 379.42 112.10 379.00C112.94 378.58 113.77 377.75 114.61 377.75C115.45 377.75 116.28 378.16 117.12 379.00C117.96 379.84 118.92 381.39 119.63 382.77C120.34 384.15 120.68 385.19 121.39 387.28C122.10 389.37 123.06 392.51 123.90 395.31C124.74 398.11 125.57 402.00 126.40 404.09C127.23 406.18 128.07 407.43 128.91 407.85C129.75 408.27 130.67 407.65 131.42 406.60C132.17 405.56 132.68 403.88 133.43 401.58C134.18 399.28 135.10 395.52 135.94 392.80C136.78 390.08 137.60 387.99 138.44 385.27C139.28 382.55 140.11 379.21 140.95 376.49C141.79 373.77 142.62 370.85 143.46 368.97C144.30 367.09 145.13 366.17 145.97 365.21C146.81 364.25 147.64 363.62 148.48 363.20C149.32 362.78 150.15 362.70 150.99 362.70C151.83 362.70 152.58 362.78 153.50 363.20C154.42 363.62 155.46 364.67 156.51 365.21C157.56 365.75 158.68 366.25 159.77 366.46C160.86 366.67 161.99 366.67 163.03 366.46C164.07 366.25 165.04 365.21 166.04 365.21C167.04 365.21 168.13 366.04 169.05 366.46C169.97 366.88 170.72 367.71 171.56 367.71C172.40 367.71 173.23 366.79 174.07 366.46C174.91 366.13 175.73 365.71 176.57 365.71C177.41 365.71 178.24 365.29 179.08 366.46C179.92 367.63 180.75 370.85 181.59 372.73C182.43 374.61 183.26 375.99 184.10 377.75C184.94 379.51 185.77 382.22 186.61 383.27C187.45 384.31 188.28 384.73 189.12 384.02C189.96 383.31 190.79 380.96 191.63 379.00C192.47 377.04 193.29 374.20 194.13 372.23C194.97 370.26 195.80 368.30 196.64 367.21C197.48 366.12 198.31 365.71 199.15 365.71C199.99 365.71 200.82 366.88 201.66 367.21C202.50 367.54 203.33 367.96 204.17 367.71C205.01 367.46 205.84 366.21 206.68 365.71C207.52 365.21 208.23 364.78 209.19 364.70C210.15 364.62 211.49 364.79 212.45 365.21C213.41 365.63 214.12 366.58 214.96 367.21C215.80 367.84 216.62 368.26 217.46 368.97C218.30 369.68 219.13 370.23 219.97 371.48C220.81 372.73 221.64 375.24 222.48 376.49C223.32 377.74 224.07 378.79 224.99 379.00C225.91 379.21 227.47 378.88 228.00 377.75C228.53 376.62 227.81 372.73 228.15 372.23C228.49 371.73 229.41 373.82 230.01 374.74C230.61 375.66 231.05 376.83 231.76 377.75C232.47 378.67 233.56 380.05 234.27 380.26C234.98 380.47 235.40 379.84 236.03 379.00C236.66 378.16 237.28 376.91 238.03 375.24C238.78 373.57 239.70 370.43 240.54 368.97C241.38 367.51 242.21 367.09 243.05 366.46C243.89 365.83 244.72 365.50 245.56 365.21C246.40 364.92 247.23 365.33 248.07 364.70C248.91 364.07 249.74 362.40 250.58 361.44C251.42 360.48 252.25 359.35 253.09 358.93C253.93 358.51 254.75 358.72 255.59 358.93C256.43 359.14 257.26 360.06 258.10 360.19C258.94 360.32 259.77 359.90 260.61 359.69C261.45 359.48 262.28 359.06 263.12 358.93C263.96 358.80 264.79 358.51 265.63 358.93C266.47 359.35 267.30 359.98 268.14 361.44C268.98 362.90 269.81 365.83 270.65 367.71C271.48 369.59 272.31 371.14 273.15 372.73C273.99 374.32 274.82 376.00 275.66 377.25C276.50 378.50 277.42 379.76 278.17 380.26C278.92 380.76 279.43 380.68 280.18 380.26C280.93 379.84 281.86 378.92 282.69 377.75C283.52 376.58 284.36 374.90 285.19 373.23C286.02 371.56 286.86 369.38 287.70 367.71C288.54 366.04 289.37 364.25 290.21 363.20C291.05 362.15 291.88 361.86 292.72 361.44C293.56 361.02 294.39 360.81 295.23 360.69C296.07 360.56 296.90 360.27 297.74 360.69C298.58 361.11 299.42 362.36 300.25 363.20C301.08 364.04 301.92 364.96 302.75 365.71C303.58 366.46 304.42 367.17 305.26 367.71C306.10 368.25 306.93 368.88 307.77 368.97C308.61 369.06 309.44 368.64 310.28 368.22C311.12 367.80 311.95 367.17 312.79 366.46C313.63 365.75 314.46 364.91 315.30 363.95C316.14 362.99 316.98 361.53 317.81 360.69C318.64 359.85 319.48 359.10 320.31 358.93C321.14 358.76 321.98 359.48 322.82 359.69C323.66 359.90 324.49 360.32 325.33 360.19C326.17 360.06 327.00 359.56 327.84 358.93C328.68 358.30 329.51 357.26 330.35 356.43C331.19 355.60 332.02 354.76 332.86 353.92C333.70 353.08 334.54 351.95 335.37 351.41C336.20 350.87 337.04 350.66 337.87 350.66C338.70 350.66 339.54 351.16 340.38 351.41C341.22 351.66 342.14 352.37 342.89 352.16C343.64 351.95 344.23 351.32 344.90 350.15C345.57 348.98 346.24 346.19 346.91 345.14C347.58 344.09 348.33 343.88 348.91 343.88C349.50 343.88 349.92 343.68 350.42 345.14C350.92 346.60 351.34 350.15 351.92 352.66C352.50 355.17 353.26 358.18 353.93 360.19C354.60 362.20 355.19 363.86 355.94 364.70C356.69 365.54 357.61 365.33 358.44 365.21C359.27 365.08 360.11 364.28 360.95 363.95C361.79 363.62 362.62 363.74 363.46 363.20C364.30 362.66 365.22 361.19 365.97 360.69C366.72 360.19 367.31 360.06 367.98 360.19C368.65 360.31 369.23 361.36 369.98 361.44C370.73 361.52 371.65 360.98 372.49 360.69C373.33 360.40 374.16 359.77 375.00 359.69C375.84 359.61 376.67 359.61 377.51 360.19C378.35 360.77 379.18 362.36 380.02 363.20C380.86 364.04 381.69 364.96 382.53 365.21C383.37 365.46 384.21 365.20 385.04 364.70C385.88 364.20 386.71 362.73 387.54 362.19C388.38 361.65 389.21 361.27 390.05 361.44C390.89 361.61 391.81 362.49 392.56 363.20C393.31 363.91 393.90 365.17 394.57 365.71C395.24 366.25 395.90 367.59 396.57 366.46C397.24 365.33 397.91 362.90 398.58 358.93C399.25 354.96 399.92 347.86 400.59 342.63C401.26 337.40 401.93 332.18 402.60 327.58C403.27 322.98 403.93 318.38 404.60 315.03C405.27 311.68 405.94 309.10 406.61 307.51C407.28 305.92 407.95 305.29 408.62 305.50C409.29 305.71 409.95 306.75 410.62 308.76C411.29 310.77 411.96 313.99 412.63 317.54C413.30 321.10 413.97 326.33 414.64 330.09C415.31 333.85 415.97 336.78 416.64 340.12C417.31 343.46 417.90 346.80 418.65 350.15C419.40 353.50 420.32 356.84 421.16 360.19C422.00 363.54 422.83 367.09 423.67 370.22C424.51 373.36 425.43 377.41 426.18 379.00C426.93 380.59 427.43 380.17 428.18 379.75C428.93 379.33 429.85 377.45 430.69 376.49C431.53 375.53 432.45 374.53 433.20 373.99C433.95 373.45 434.62 372.19 435.21 373.23C435.79 374.28 436.12 377.21 436.71 380.26C437.29 383.31 438.05 388.21 438.72 391.55C439.39 394.89 440.06 398.36 440.73 400.32C441.40 402.28 442.06 403.00 442.73 403.34C443.40 403.67 444.07 403.04 444.74 402.33C445.41 401.62 446.21 399.91 446.75 399.07C447.29 398.23 447.77 397.73 448.00 397.31C448.23 396.89 447.73 397.73 448.15 396.56C448.57 395.39 449.70 392.50 450.51 390.29C451.32 388.08 452.18 385.57 453.02 383.27C453.86 380.97 454.69 378.75 455.53 376.49C456.36 374.23 457.19 371.69 458.03 369.72C458.87 367.75 459.70 366.08 460.54 364.70C461.38 363.32 462.30 361.98 463.05 361.44C463.80 360.90 464.39 360.81 465.06 361.44C465.73 362.07 466.35 364.16 467.06 365.21C467.77 366.25 468.52 367.21 469.32 367.71C470.12 368.21 471.12 368.43 471.83 368.22C472.54 368.01 472.96 367.80 473.59 366.46C474.22 365.12 474.92 362.49 475.59 360.19C476.26 357.89 476.93 354.84 477.60 352.66C478.27 350.49 478.94 348.31 479.61 347.14C480.28 345.97 480.94 345.47 481.61 345.64C482.28 345.81 482.95 347.31 483.62 348.15C484.29 348.99 484.96 350.24 485.63 350.66C486.30 351.08 486.97 350.54 487.64 350.66C488.31 350.79 488.97 350.87 489.64 351.41C490.31 351.95 490.98 352.67 491.65 353.92C492.32 355.17 492.99 356.42 493.66 358.93C494.33 361.44 494.99 366.04 495.66 368.97C496.33 371.90 496.92 374.40 497.67 376.49C498.42 378.58 499.34 380.05 500.18 381.51C501.02 382.97 501.86 384.43 502.69 385.27C503.52 386.11 504.36 386.53 505.19 386.53C506.02 386.53 506.86 385.69 507.70 385.27C508.54 384.85 509.37 384.35 510.21 384.02C511.05 383.69 511.88 383.48 512.72 383.27C513.56 383.06 514.39 383.36 515.23 382.77C516.07 382.18 516.90 380.80 517.74 379.75C518.58 378.70 519.41 377.58 520.25 376.49C521.09 375.40 521.91 374.06 522.75 373.23C523.59 372.40 524.42 371.48 525.26 371.48C526.10 371.48 527.02 372.60 527.77 373.23C528.52 373.86 529.07 374.91 529.78 375.24C530.49 375.57 531.25 375.03 532.04 375.24C532.83 375.45 533.84 375.65 534.55 376.49C535.26 377.33 535.67 378.17 536.30 380.26C536.93 382.35 537.64 386.32 538.31 389.04C538.98 391.76 539.56 394.47 540.31 396.56C541.06 398.65 541.90 400.45 542.82 401.58C543.74 402.71 544.91 403.05 545.83 403.34C546.75 403.63 547.50 403.84 548.34 403.34C549.18 402.84 550.01 401.66 550.85 400.32C551.69 398.98 552.52 397.06 553.36 395.31C554.20 393.56 555.03 391.88 555.87 389.79C556.71 387.70 557.54 384.99 558.38 382.77C559.22 380.55 560.04 378.08 560.88 376.49C561.72 374.90 562.55 373.86 563.39 373.23C564.23 372.60 565.06 372.73 565.90 372.73C566.74 372.73 567.57 373.31 568.41 373.23C569.25 373.15 570.08 372.94 570.92 372.23C571.76 371.52 572.59 369.93 573.43 368.97C574.27 368.01 575.11 366.88 575.94 366.46C576.78 366.04 577.61 366.04 578.44 366.46C579.28 366.88 580.11 368.13 580.95 368.97C581.79 369.81 582.62 370.52 583.46 371.48C584.30 372.44 585.13 373.78 585.97 374.74C586.81 375.70 587.64 376.54 588.48 377.25C589.32 377.96 590.15 378.08 590.99 379.00C591.83 379.92 592.66 381.51 593.50 382.77C594.34 384.02 595.25 385.90 596.00 386.53C596.75 387.16 597.26 387.07 598.01 386.53C598.76 385.99 599.68 384.31 600.52 383.27C601.36 382.22 602.19 381.39 603.03 380.26C603.87 379.13 604.70 378.08 605.54 376.49C606.38 374.90 607.21 372.52 608.05 370.72C608.88 368.92 609.71 366.84 610.55 365.71C611.38 364.58 612.22 364.45 613.06 363.95C613.90 363.45 614.73 362.70 615.57 362.70C616.41 362.70 617.24 363.53 618.08 363.95C618.92 364.37 619.75 364.67 620.59 365.21C621.43 365.75 622.26 366.58 623.10 367.21C623.94 367.84 624.77 368.38 625.61 368.97C626.45 369.56 627.27 370.09 628.11 370.72C628.95 371.35 629.78 372.31 630.62 372.73C631.46 373.15 632.29 373.15 633.13 373.23C633.97 373.31 634.80 373.52 635.64 373.23C636.48 372.94 637.31 372.48 638.15 371.48C638.99 370.48 639.82 368.67 640.66 367.21C641.50 365.75 642.33 363.79 643.17 362.70C644.00 361.61 644.83 360.90 645.67 360.69C646.50 360.48 647.34 360.90 648.18 361.44C649.02 361.98 649.85 363.24 650.69 363.95C651.53 364.66 652.45 365.50 653.20 365.71C653.95 365.92 654.54 365.50 655.21 365.21C655.88 364.92 656.49 363.87 657.21 363.95C657.93 364.03 658.71 364.87 659.51 365.71C660.31 366.55 661.18 367.88 662.02 368.97C662.86 370.06 663.69 371.27 664.53 372.23C665.37 373.19 666.28 374.24 667.03 374.74C667.78 375.24 668.37 375.66 669.04 375.24C669.71 374.82 670.38 373.49 671.05 372.23C671.72 370.98 672.38 368.88 673.05 367.71C673.72 366.54 674.39 365.96 675.06 365.21C675.73 364.46 676.40 364.25 677.07 363.20C677.74 362.15 678.41 360.48 679.08 358.93C679.75 357.38 680.41 355.30 681.08 353.92C681.75 352.54 682.42 351.50 683.09 350.66C683.76 349.82 684.43 349.19 685.10 348.90C685.77 348.61 686.43 349.19 687.10 348.90C687.77 348.61 688.44 347.98 689.11 347.14C689.78 346.30 690.45 344.71 691.12 343.88C691.79 343.05 692.45 342.13 693.12 342.13C693.79 342.13 694.46 342.88 695.13 343.88C695.80 344.88 696.47 347.10 697.14 348.15C697.81 349.19 698.47 350.02 699.14 350.15C699.81 350.27 700.48 348.90 701.15 348.90C701.82 348.90 702.49 349.10 703.16 350.15C703.83 351.19 704.49 353.41 705.16 355.17C705.83 356.93 706.50 359.10 707.17 360.69C707.84 362.28 708.51 363.86 709.18 364.70C709.85 365.54 710.51 365.83 711.18 365.71C711.85 365.58 712.52 364.66 713.19 363.95C713.86 363.24 714.53 361.86 715.20 361.44C715.87 361.02 716.54 361.15 717.21 361.44C717.88 361.73 718.54 362.57 719.21 363.20C719.88 363.83 720.55 364.54 721.22 365.21C721.89 365.88 722.56 366.29 723.23 367.21C723.90 368.13 724.56 369.30 725.23 370.72C725.90 372.14 726.57 374.24 727.24 375.74C727.91 377.25 728.58 378.79 729.25 379.75C729.92 380.71 730.58 381.51 731.25 381.51C731.92 381.51 732.59 381.00 733.26 379.75C733.93 378.50 734.60 376.08 735.27 373.99C735.94 371.90 736.60 369.18 737.27 367.21C737.94 365.24 738.61 363.28 739.28 362.19C739.95 361.10 740.62 360.69 741.29 360.69C741.96 360.69 742.62 361.23 743.29 362.19C743.96 363.15 744.63 365.12 745.30 366.46C745.97 367.80 746.64 369.26 747.31 370.22C747.98 371.18 748.64 371.90 749.31 372.23C749.98 372.56 750.65 372.48 751.32 372.23C751.99 371.98 752.75 371.06 753.33 370.72C753.92 370.39 754.58 370.30 754.83 370.22" fill="none" stroke="#ff6d00" stroke-width="1.4" stroke-linejoin="round"/>
<g><rect x="8" y="158" width="232" height="26" fill="#fff" fill-opacity="0.7"/><rect x="8" y="297" width="424" height="26" fill="#fff" fill-opacity="0.7"/><text x="47.7" y="31.7" font-size="18.5" fill="#b4b4b4" font-weight="normal" text-anchor="start" textLength="42.2" lengthAdjust="spacingAndGlyphs" stroke="#b4b4b4" stroke-width="0.6">PEPE</text>
<text x="112.6" y="31.7" font-size="18.5" fill="#b4b4b4" font-weight="normal" text-anchor="start" textLength="78.5" lengthAdjust="spacingAndGlyphs" stroke="#b4b4b4" stroke-width="0.6">TetherUS</text>
<text x="208.8" y="31.7" font-size="18.5" fill="#b4b4b4" font-weight="normal" text-anchor="start" textLength="19.3" lengthAdjust="spacingAndGlyphs" stroke="#b4b4b4" stroke-width="0.6">1h</text>
<text x="245.2" y="31.7" font-size="18.5" fill="#b4b4b4" font-weight="normal" text-anchor="start" textLength="68.9" lengthAdjust="spacingAndGlyphs" stroke="#b4b4b4" stroke-width="0.6">Binance</text>
<path d="M97.900 31.800h2.300l5-13.600h-2.300z" fill="#b4b4b4"/><circle cx="199.400" cy="25.200" r="1.300" fill="#b4b4b4"/><circle cx="236.900" cy="25.200" r="1.300" fill="#b4b4b4"/><path d="M329 17.200h15l-4.400 7.300 4.400 7.300h-15z" fill="#c4c4c4"/><g fill="none" stroke="#131722" stroke-width="1.3" stroke-linecap="round" stroke-linejoin="round">
<path d="M361.300 24.200c2.200-4.600 5.800-7 9.800-7s7.600 2.400 9.800 7c-2.200 4.600-5.800 7-9.800 7s-7.600-2.400-9.800-7z"/>
<circle cx="371.100" cy="24.200" r="3.400"/>
<path d="M364.100 31.900L378.700 16.900" stroke="#fff" stroke-width="3.600" stroke-linecap="butt"/>
<path d="M364.300 31.700L378.500 17.100"/>
</g><circle cx="34.800" cy="20" r="7.200" fill="#0f9c9c"/>
<path d="M31.400 17.700h6.600l1.200 1.900-4.500 3.400-4.500-3.400z" fill="#fff"/>
<path d="M33 19h3.600l-1.800 2.600z" fill="#0f9c9c"/>
<circle cx="27" cy="27.800" r="8.600" fill="#fff"/>
<circle cx="27" cy="27.800" r="7" fill="#3d9940"/>
<path d="M24.300 25.800h4.600M23.800 28.600h6.400" stroke="#1f4d22" stroke-width="1.100"/>
<path d="M25 24.300h3" stroke="#2c6e2f" stroke-width="0.800"/>
<rect x="18.500" y="44.500" width="111" height="42" rx="6" fill="#fff" stroke="#f23645" stroke-width="1"/>
<rect x="213.500" y="44.500" width="111" height="42" rx="6" fill="#fff" stroke="#2962ff" stroke-width="1"/>
<text x="31.8" y="61.5" font-size="15" fill="#f23645" font-weight="bold" text-anchor="start" textLength="83.6" lengthAdjust="spacingAndGlyphs">0.00000999</text>
<text x="59" y="78.5" font-size="14" fill="#f23645" font-weight="normal" text-anchor="start" textLength="29" lengthAdjust="spacingAndGlyphs" stroke="#f23645" stroke-width="0.12">SELL</text>
<text x="139.7" y="69" font-size="12.6" fill="#131722" font-weight="normal" text-anchor="start" textLength="63" lengthAdjust="spacingAndGlyphs" stroke="#131722" stroke-width="0.12">0.00000001</text>
<text x="227.6" y="61.5" font-size="15" fill="#2962ff" font-weight="bold" text-anchor="start" textLength="83.3" lengthAdjust="spacingAndGlyphs">0.00001000</text>
<text x="256.4" y="78.5" font-size="14" fill="#2962ff" font-weight="normal" text-anchor="start" textLength="25" lengthAdjust="spacingAndGlyphs" stroke="#2962ff" stroke-width="0.12">BUY</text>
<text x="19.4" y="174.8" font-size="15" fill="#131722" font-weight="normal" text-anchor="start" textLength="83.5" lengthAdjust="spacingAndGlyphs" stroke="#131722" stroke-width="0.12">RSI 14 close</text>
<circle cx="125" cy="168.800" r="11" fill="#e9e2fc"/>
<g fill="none" stroke="#5b21f5" stroke-width="1.800">
<path d="M118.900 166.900a6.300 6.300 0 0 1 11.700-1.200"/>
<path d="M131.100 170.700a6.300 6.300 0 0 1-11.700 1.200"/>
</g>
<path d="M133.600 166.300l-2.300 3.200-2.600-2.600z" fill="#5b21f5"/>
<path d="M116.400 171.300l2.300-3.200 2.600 2.600z" fill="#5b21f5"/>
<text x="146.8" y="174.8" font-size="15" fill="#7e57c2" font-weight="normal" text-anchor="start" textLength="38.5" lengthAdjust="spacingAndGlyphs" stroke="#7e57c2" stroke-width="0.12">58.12</text>
<text x="193.9" y="174.8" font-size="15" fill="#fdd835" font-weight="normal" text-anchor="start" textLength="39.3" lengthAdjust="spacingAndGlyphs" stroke="#fdd835" stroke-width="0.12">47.03</text>
<text x="19.4" y="314.2" font-size="15" fill="#131722" font-weight="normal" text-anchor="start" textLength="124.6" lengthAdjust="spacingAndGlyphs" stroke="#131722" stroke-width="0.12">MACD 12 26 close</text>
<text x="154.7" y="314.2" font-size="15" fill="#26a69a" font-weight="normal" text-anchor="start" textLength="81.8" lengthAdjust="spacingAndGlyphs" stroke="#26a69a" stroke-width="0.12">0.00000002</text>
<text x="245" y="314.2" font-size="15" fill="#2962ff" font-weight="normal" text-anchor="start" textLength="82.1" lengthAdjust="spacingAndGlyphs" stroke="#2962ff" stroke-width="0.12">0.00000000</text>
<text x="335.7" y="314.2" font-size="15" fill="#ff6d00" font-weight="normal" text-anchor="start" textLength="89.3" lengthAdjust="spacingAndGlyphs" stroke="#ff6d00" stroke-width="0.12">−0.00000002</text>
</g><rect x="761" y="4" width="107" height="455" fill="#fff"/><rect x="8" y="148" width="860" height="1" fill="#e0e3eb"/><rect x="8" y="286" width="860" height="2" fill="#e0e3eb"/><text x="772.5" y="23.9" font-size="15" fill="#131722" font-weight="normal" text-anchor="start" textLength="75" lengthAdjust="spacingAndGlyphs" stroke="#131722" stroke-width="0.12">0.50000000</text>
<text x="772.5" y="82.1" font-size="15" fill="#131722" font-weight="normal" text-anchor="start" textLength="75" lengthAdjust="spacingAndGlyphs" stroke="#131722" stroke-width="0.12">0.00000000</text>
<text x="772.5" y="141" font-size="15" fill="#131722" font-weight="normal" text-anchor="start" textLength="83.5" lengthAdjust="spacingAndGlyphs" stroke="#131722" stroke-width="0.12">−0.50000000</text>
<text x="772.3" y="180.7" font-size="15" fill="#131722" font-weight="normal" text-anchor="start" textLength="36.5" lengthAdjust="spacingAndGlyphs" stroke="#131722" stroke-width="0.12">75.00</text>
<text x="772.3" y="263.7" font-size="15" fill="#131722" font-weight="normal" text-anchor="start" textLength="36.5" lengthAdjust="spacingAndGlyphs" stroke="#131722" stroke-width="0.12">25.00</text>
<path d="M762 194h52a2 2 0 0 1 2 2v19h-54z" fill="#7e57c2"/><path d="M762 215h54v19a2 2 0 0 1-2 2h-52z" fill="#fdd835"/><text x="772.8" y="209.5" font-size="15" fill="#ffffff" font-weight="normal" text-anchor="start" textLength="36.5" lengthAdjust="spacingAndGlyphs" stroke="#ffffff" stroke-width="0.12">58.12</text>
<text x="772.8" y="230.5" font-size="15" fill="#131722" font-weight="normal" text-anchor="start" textLength="36.5" lengthAdjust="spacingAndGlyphs" stroke="#131722" stroke-width="0.12">47.03</text>
<path d="M762 354.500h91a2 2 0 0 1 2 2v18.500h-93z" fill="#26a69a"/><path d="M762 375h93v19a2 2 0 0 1-2 2h-91z" fill="#2962ff"/><path d="M762 397h99a2 2 0 0 1 2 2v17a2 2 0 0 1-2 2h-99z" fill="#ff6d00"/><text x="773.5" y="369.8" font-size="15" fill="#ffffff" font-weight="normal" text-anchor="start" textLength="75" lengthAdjust="spacingAndGlyphs" stroke="#ffffff" stroke-width="0.12">0.00000002</text>
<text x="773.5" y="390.6" font-size="15" fill="#ffffff" font-weight="normal" text-anchor="start" textLength="75" lengthAdjust="spacingAndGlyphs" stroke="#ffffff" stroke-width="0.12">0.00000000</text>
<text x="773.5" y="412.5" font-size="15" fill="#ffffff" font-weight="normal" text-anchor="start" textLength="83.5" lengthAdjust="spacingAndGlyphs" stroke="#ffffff" stroke-width="0.12">−0.00000002</text>
<clipPath id="cl"><rect x="730" y="110" width="31" height="40"/></clipPath>
<g clip-path="url(#cl)"><circle cx="754.250" cy="131.350" r="12.100" fill="#fff" stroke="#9c27b0" stroke-width="1.600"/>
<path d="M758.600 124.800l-9.200 6.900h4.300l-3.300 6.200 9-7.200h-4.300z" fill="#9c27b0"/></g><text x="46.9" y="448.9" font-size="15" fill="#131722" font-weight="normal" text-anchor="start" textLength="13.8" lengthAdjust="spacingAndGlyphs" stroke="#131722" stroke-width="0.12">21</text>
<text x="122.8" y="448.9" font-size="15" fill="#131722" font-weight="normal" text-anchor="start" textLength="14.4" lengthAdjust="spacingAndGlyphs" stroke="#131722" stroke-width="0.12">26</text>
<text x="208.3" y="448.9" font-size="15" fill="#131722" font-weight="bold" text-anchor="start" textLength="24.8" lengthAdjust="spacingAndGlyphs">Sep</text>
<text x="292.1" y="448.9" font-size="15" fill="#131722" font-weight="normal" text-anchor="start" textLength="7.5" lengthAdjust="spacingAndGlyphs" stroke="#131722" stroke-width="0.12">6</text>
<text x="364.5" y="448.9" font-size="15" fill="#131722" font-weight="normal" text-anchor="start" textLength="13.1" lengthAdjust="spacingAndGlyphs" stroke="#131722" stroke-width="0.12">11</text>
<text x="439.6" y="448.9" font-size="15" fill="#131722" font-weight="normal" text-anchor="start" textLength="14.8" lengthAdjust="spacingAndGlyphs" stroke="#131722" stroke-width="0.12">16</text>
<text x="514.6" y="448.9" font-size="15" fill="#131722" font-weight="normal" text-anchor="start" textLength="14.0" lengthAdjust="spacingAndGlyphs" stroke="#131722" stroke-width="0.12">21</text>
<text x="589.8" y="448.9" font-size="15" fill="#131722" font-weight="normal" text-anchor="start" textLength="15.3" lengthAdjust="spacingAndGlyphs" stroke="#131722" stroke-width="0.12">26</text>
<text x="661.3" y="448.9" font-size="15" fill="#131722" font-weight="bold" text-anchor="start" textLength="23.4" lengthAdjust="spacingAndGlyphs">Oct</text>
<text x="744.1" y="448.9" font-size="15" fill="#131722" font-weight="normal" text-anchor="start" textLength="7.5" lengthAdjust="spacingAndGlyphs" stroke="#131722" stroke-width="0.12">6</text>
<path d="M806.700 443.800l4.300-7.700h8.500l4.300 7.700-4.300 7.700h-8.500z" fill="none" stroke="#131722" stroke-width="1.400" stroke-linejoin="round"/>
<circle cx="815.250" cy="443.800" r="2.500" fill="none" stroke="#131722" stroke-width="1.400"/><g stroke="#fff" stroke-width="3" stroke-linejoin="round" paint-order="stroke" fill="#111318">
<path d="M22.900 390h15.100v18.200h-7.600v-11.200h-7.500z"/>
<circle cx="44.200" cy="393.500" r="3.500"/>
<path d="M51.100 390h9.100l-6.600 18.200h-9z"/>
<text x="69.500" y="408" font-size="25" font-weight="bold" textLength="150.500" lengthAdjust="spacingAndGlyphs">TradingView</text>
</g></svg>
</div>
</body></html>
